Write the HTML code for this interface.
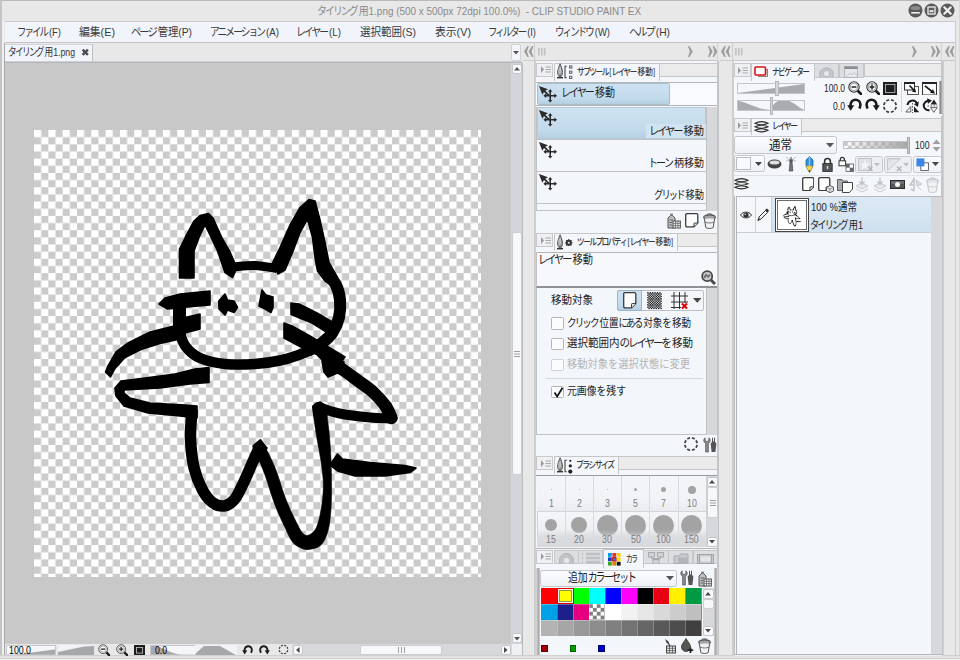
<!DOCTYPE html>
<html lang="ja"><head><meta charset="utf-8"><title>CLIP STUDIO PAINT EX</title>
<style>
html,body{margin:0;padding:0}
body{width:960px;height:660px;overflow:hidden;background:#e8e8e8;position:relative;font-family:"Liberation Sans","Noto Sans CJK JP",sans-serif}
div,span,svg{position:absolute;box-sizing:border-box}
.t{white-space:nowrap;transform-origin:0 50%;font-family:"Liberation Sans","Noto Sans CJK JP",sans-serif}
.t .k{position:static;letter-spacing:-.2em}
</style></head>
<body>
<div style="left:0px;top:0px;width:960px;height:21px;background:#e8e8e8;border-top:1px solid #b9b9b9"></div>
<span class="t" style="transform:scaleX(0.902);left:317.0px;top:3.0px;font-size:11px;line-height:16px;color:#8a8a8a;"><span class="k">タイリン</span>グ用1.png (500 x 500px 72dpi 100.0%)&nbsp; - CLIP STUDIO PAINT EX</span>
<svg style="left:907.5px;top:3.2px;" width="15" height="15" viewBox="0 0 15 15"><circle cx="7.5" cy="7.5" r="7" fill="#5a5a5a"/><ellipse cx="7.5" cy="5" rx="5" ry="2" fill="#8a8a8a"/><rect x="3.2" y="9" width="8.6" height="1.6" fill="#eee"/></svg>
<svg style="left:923.5px;top:3.2px;" width="15" height="15" viewBox="0 0 15 15"><circle cx="7.5" cy="7.5" r="7" fill="#5a5a5a"/><rect x="4" y="4" width="7" height="7" fill="none" stroke="#eee" stroke-width="1.3"/><rect x="5.5" y="7" width="4" height="2.2" fill="#ddd"/></svg>
<svg style="left:939.5px;top:3.2px;" width="15" height="15" viewBox="0 0 15 15"><circle cx="7.5" cy="7.5" r="7" fill="#5a5a5a"/><path d="M4.3 4.3 L10.7 10.7 M10.7 4.3 L4.3 10.7" stroke="#f2f2f2" stroke-width="2.2" stroke-linecap="round"/></svg>
<div style="left:5px;top:21px;width:950px;height:22px;background:#f1f4fa;border-top:1px solid #c9c9c9;border-bottom:1px solid #c4c4c4"></div>
<span class="t" style="transform:scaleX(0.818);left:17.0px;top:23.5px;font-size:11.5px;line-height:17px;color:#3a3a3a;"><span class="k">ファイ</span>ル(F)</span>
<span class="t" style="transform:scaleX(0.939);left:79.0px;top:23.5px;font-size:11.5px;line-height:17px;color:#3a3a3a;">編集(E)</span>
<span class="t" style="transform:scaleX(0.894);left:131.0px;top:23.5px;font-size:11.5px;line-height:17px;color:#3a3a3a;"><span class="k">ペー</span>ジ管理(P)</span>
<span class="t" style="transform:scaleX(0.846);left:210.0px;top:23.5px;font-size:11.5px;line-height:17px;color:#3a3a3a;"><span class="k">アニメーショ</span>ン(A)</span>
<span class="t" style="transform:scaleX(0.852);left:296.0px;top:23.5px;font-size:11.5px;line-height:17px;color:#3a3a3a;"><span class="k">レイヤ</span>ー(L)</span>
<span class="t" style="transform:scaleX(0.913);left:360.0px;top:23.5px;font-size:11.5px;line-height:17px;color:#3a3a3a;">選択範囲(S)</span>
<span class="t" style="transform:scaleX(0.939);left:435.0px;top:23.5px;font-size:11.5px;line-height:17px;color:#3a3a3a;">表示(V)</span>
<span class="t" style="transform:scaleX(0.814);left:488.0px;top:23.5px;font-size:11.5px;line-height:17px;color:#3a3a3a;"><span class="k">フィルタ</span>ー(I)</span>
<span class="t" style="transform:scaleX(0.823);left:555.0px;top:23.5px;font-size:11.5px;line-height:17px;color:#3a3a3a;"><span class="k">ウィンド</span>ウ(W)</span>
<span class="t" style="transform:scaleX(0.894);left:629.0px;top:23.5px;font-size:11.5px;line-height:17px;color:#3a3a3a;"><span class="k">ヘル</span>プ(H)</span>
<div style="left:0px;top:0px;width:1.5px;height:660px;background:#c4c4c4"></div>
<div style="left:1.5px;top:21px;width:2.5px;height:634px;background:#f0f0f0"></div>
<div style="left:4px;top:43px;width:1.5px;height:612px;background:#a8a8a8"></div>
<div style="left:955px;top:21px;width:1px;height:634px;background:#cccccc"></div>
<div style="left:958.5px;top:0px;width:1.5px;height:660px;background:#d8d8d8"></div>
<div style="left:0px;top:655px;width:960px;height:5px;background:linear-gradient(#e4e4e4 0,#e4e4e4 55%,#cfcfcf 56%,#cfcfcf 72%,#f0f0f0 73%);border-top:1px solid #d0d0d0"></div>
<div style="left:5px;top:43px;width:517px;height:18px;background:#e8e8e8"></div>
<div style="left:5px;top:44.2px;width:88px;height:17px;background:#f1f4fa;border-right:1px solid #bcbcbc;border-top:1px solid #d2d4d8"></div>
<span class="t" style="transform:scaleX(0.791);left:8.0px;top:44.2px;font-size:11px;line-height:16px;color:#333;"><span class="k">タイリン</span>グ用1.png</span>
<svg style="left:80.5px;top:48.4px;" width="8.5" height="8.5" viewBox="0 0 8.5 8.5"><path d="M1.6 1.6 L6.9 6.9 M6.9 1.6 L1.6 6.9" stroke="#4e4e4e" stroke-width="2.5"/></svg>
<div style="left:511.3px;top:43.8px;width:10.2px;height:17px;background:#f4f6fb;border:1px solid #cfd0d3;border-radius:2px"></div>
<svg style="left:513.4px;top:50.5px;" width="6" height="4" viewBox="0 0 6 4"><path d="M0 0 L6 0 L3 3.5 Z" fill="#555"/></svg>
<div style="left:5px;top:60.8px;width:517px;height:2.7px;background:linear-gradient(#dcdfe4,#a6a8ab)"></div>
<div style="left:5px;top:63px;width:506px;height:581px;background:#c8c8c8"></div>
<svg style="left:33.8px;top:129.6px" width="447.6" height="447.3" viewBox="0 0 62.5 62.5" preserveAspectRatio="none"><defs><pattern id="chk" width="2" height="2" patternUnits="userSpaceOnUse"><rect width="2" height="2" fill="#fff"/><rect x="1" y="0" width="1" height="1" fill="#cbcbcb"/><rect x="0" y="1" width="1" height="1" fill="#cbcbcb"/></pattern></defs><rect width="62.5" height="62.5" fill="url(#chk)"/></svg>
<svg style="left:34px;top:130px" width="447.5" height="447.5" viewBox="34 130 447.5 447.5" shape-rendering="geometricPrecision"><polygon points="179.5,278 179.5,249 186,236 194,221 200,215.5 208.5,213.5 213,218 222,238 230,252 237,268 232.5,277.5 225,272.5 217.5,251 210,235 205,225 199,237.5 194,251 194,278" fill="#000" stroke="#000" stroke-width="1.6" stroke-linejoin="round"/><path d="M233 267 C236.7 266.8 247.7 265.2 255 265.5 C262.3 265.8 273.3 268.0 277 268.5" fill="none" stroke="#000" stroke-width="9" stroke-linejoin="round" stroke-linecap="butt"/><polygon points="272.5,263 280,247.5 290,225 300,207.5 309,199.5 315,201 320,220 325,242.5 329,262.5 337.5,277.5 331,285 325,281 317.5,271 315,257.5 312.5,237.5 307.5,219 300,232.5 292.5,252.5 285,270 278,274" fill="#000" stroke="#000" stroke-width="1.6" stroke-linejoin="round"/><path d="M326 272 C327.7 274.2 333.7 280.3 336 285 C338.3 289.7 339.5 294.6 340 300 C340.5 305.4 340.2 312.1 339 317.5 C337.8 322.9 335.2 328.3 332.5 332.5 C329.8 336.7 326.7 339.4 322.5 342.5 C318.3 345.6 310.0 349.6 307.5 351" fill="none" stroke="#000" stroke-width="12" stroke-linejoin="round" stroke-linecap="butt"/><path d="M312 349.5 C310.0 350.3 305.3 352.7 300 354.5 C294.7 356.3 287.5 358.9 280 360.5 C272.5 362.1 264.2 363.4 255 364 C245.8 364.6 234.2 365.0 225 364 C215.8 363.0 206.5 360.8 200 358 C193.5 355.2 189.3 351.2 186 347 C182.7 342.8 181.2 337.8 180 333 C178.8 328.2 179.1 322.7 179 318 C178.9 313.3 179.4 307.2 179.5 305" fill="none" stroke="#000" stroke-width="10.5" stroke-linejoin="round" stroke-linecap="butt"/><path d="M179.5 300 L179.5 336" fill="none" stroke="#000" stroke-width="13" stroke-linejoin="round" stroke-linecap="butt"/><polygon points="159,304 165,298 180,294 210,291 210,305 187.5,307 167.5,309" fill="#000" stroke="#000" stroke-width="1.6" stroke-linejoin="round"/><polygon points="185,317.5 200,314 200,329 185,333" fill="#000" stroke="#000" stroke-width="1.6" stroke-linejoin="round"/><polygon points="178,325 150,332 128,343 116,352 108,366 105.5,372 110.5,377 115,368.5 125,357.5 141,349.5 160,343.5 178,339.5" fill="#000" stroke="#000" stroke-width="1.6" stroke-linejoin="round"/><polygon points="218.75,301 225,294 227.5,300 234,301 237.5,307.5 234,312.5 227.5,310 225,315 219,309" fill="#000" stroke="#000" stroke-width="1.6" stroke-linejoin="round"/><polygon points="259,306 262,290 266,295 273,297 273,307.5 271,312.5 265,309" fill="#000" stroke="#000" stroke-width="1.6" stroke-linejoin="round"/><polygon points="291,303 299,304 317,313 334,323 328,333 312,323 291,314.5" fill="#000" stroke="#000" stroke-width="1.6" stroke-linejoin="round"/><polygon points="284,323 292,326 310,336 330,348 345,357 338,366 322,357 300,346.5 284,338" fill="#000" stroke="#000" stroke-width="1.6" stroke-linejoin="round"/><path d="M322 352 C323.7 353.7 328.3 358.9 332 362 C335.7 365.1 339.8 367.5 344 370.5 C348.2 373.5 352.1 376.3 357 380 C361.9 383.7 368.8 388.2 373.5 392.5 C378.2 396.8 382.5 401.8 385.5 406 C388.5 410.2 390.5 416.0 391.5 418" fill="none" stroke="#000" stroke-width="12.5" stroke-linejoin="round" stroke-linecap="round"/><polygon points="322,361 333,356 344,362 340,372 328,377 324,372" fill="#000" stroke="#000" stroke-width="1.6" stroke-linejoin="round"/><path d="M391 418.5 C387.5 418.3 377.7 418.2 370 417.5 C362.3 416.8 351.7 415.6 345 414.5 C338.3 413.4 334.5 412.2 330 411 C325.5 409.8 320.0 407.7 318 407" fill="none" stroke="#000" stroke-width="10" stroke-linejoin="round" stroke-linecap="round"/><polygon points="209,367.5 209,382.5 190,384 160,388 124,390 124,393 130,398 150,403 185,405 197,406 197,418 180,416 148,413 124,406 116,396 115,388 121,381 145,378 175,374 195,369" fill="#000" stroke="#000" stroke-width="1.6" stroke-linejoin="round"/><path d="M192 410 C191.8 414.6 190.2 427.9 190.5 437.5 C190.8 447.1 192.0 458.8 194 467.5 C196.0 476.2 199.4 484.2 202.5 490 C205.6 495.8 208.9 499.8 212.5 502.5 C216.1 505.2 220.4 506.4 224 506 C227.6 505.6 230.9 503.5 234 500 C237.1 496.5 239.4 491.2 242.5 485 C245.6 478.8 249.6 469.0 252.5 462.5 C255.4 456.0 258.8 448.8 260 446" fill="none" stroke="#000" stroke-width="11.5" stroke-linejoin="round" stroke-linecap="butt"/><path d="M255.5 450 C256.3 455.8 261.8 465.8 265 475 C268.2 484.2 271.7 496.2 275 505 C278.3 513.8 282.1 521.3 285 527.5 C287.9 533.7 289.8 538.6 292.5 542 C295.2 545.4 298.2 546.8 301 548 C303.8 549.2 305.7 550.0 309 549.5 C312.3 549.0 317.8 548.1 321 545 C324.2 541.9 326.3 537.0 328 531 C329.7 525.0 330.4 516.7 331 509 C331.6 501.3 331.5 493.1 331.5 485 C331.5 476.9 331.3 468.7 331 460.6 C330.7 452.5 330.1 443.7 329.5 436.4 C328.9 429.1 327.7 421.7 327.3 417 C326.9 412.3 328.2 410.4 327 408 C325.8 405.6 322.3 402.8 320 402.5 C317.7 402.2 314.2 404.6 313 406 C311.8 407.4 312.4 405.9 313 411 C313.6 416.1 315.3 428.1 316.6 436.4 C317.9 444.7 319.8 452.5 320.9 460.6 C322.0 468.7 323.3 476.9 323.4 485 C323.4 493.1 322.4 501.9 321.2 509 C320.0 516.1 318.4 523.2 316.4 527.5 C314.4 531.8 311.3 534.1 309 535 C306.7 535.9 304.8 535.6 302.5 533 C300.2 530.4 297.9 525.5 295 519.5 C292.1 513.5 288.3 505.7 285 497 C281.7 488.3 278.7 476.5 275 467.5 C271.3 458.5 265.5 447.6 263 443 C260.5 438.4 261.2 438.8 260 440 C258.8 441.2 254.7 444.2 255.5 450 Z" fill="#000" stroke="#000" stroke-width="0.6" stroke-linejoin="round"/><polygon points="253,446 260,440 267,448 262,458 256,456" fill="#000" stroke="#000" stroke-width="1.6" stroke-linejoin="round"/><polygon points="313,406 320,402 327,407 326,416 314,416" fill="#000" stroke="#000" stroke-width="1.6" stroke-linejoin="round"/><polygon points="330,465 337.5,454 342.5,459 370,462.5 405,465.5 416,468 410,472.5 385,476 355,476 337.5,471" fill="#000" stroke="#000" stroke-width="1.6" stroke-linejoin="round"/></svg>
<div style="left:511px;top:63px;width:11px;height:581px;background:#d3d5da"></div>
<div style="left:511.7px;top:64px;width:10px;height:9.5px;background:#f8fafd;border:1px solid #c2c4c8;border-radius:2.5px"></div>
<svg style="left:514px;top:67px;" width="6" height="4" viewBox="0 0 6 4"><path d="M0 3.5 L6 3.5 L3 0 Z" fill="#555"/></svg>
<div style="left:511.7px;top:633.3px;width:10px;height:10px;background:#f8fafd;border:1px solid #c2c4c8;border-radius:2.5px"></div>
<svg style="left:514px;top:636.5px;" width="6" height="4" viewBox="0 0 6 4"><path d="M0 0 L6 0 L3 3.5 Z" fill="#555"/></svg>
<!--VT-->
<div style="left:5px;top:644px;width:517px;height:11px;background:#e8e8e8"></div>
<!--BB-->
<div style="left:522px;top:43px;width:12.5px;height:612px;background:#e8e8e8"></div>
<div style="left:534px;top:43px;width:1px;height:612px;background:#cecece"></div>
<div style="left:522.5px;top:60px;width:12px;height:1px;background:#cfcfcf"></div>
<svg style="left:524.2px;top:46.4px;" width="9.6" height="11" viewBox="0 0 9.6 11"><path d="M4.8 0 L3.4 0 L0 5.5 L3.4 11 L4.8 11 L3 5.5 Z" fill="#9c9c9c"/><path d="M4.8 0 L3.4 0 L0 5.5 L3.4 11 L4.8 11 L3 5.5 Z" fill="#9c9c9c" transform="translate(4.6 0)"/></svg>
<div style="left:535px;top:43px;width:183px;height:18px;background:#e8e8e8;border-bottom:1px solid #c6c6c6;border-right:1px solid #d4d4d4"></div>
<svg style="left:538px;top:48.2px;" width="8" height="7.4" viewBox="0 0 8 7.4"><path d="M0.9 0 V7.4 M3.8 0 V7.4 M6.7 0 V7.4" stroke="#c2c2c2" stroke-width="1.7"/></svg>
<svg style="left:688px;top:46.4px;" width="5" height="11" viewBox="0 0 5 11"><path d="M0 0 L1.4 0 L4.8 5.5 L1.4 11 L0 11 L1.8 5.5 Z" fill="#9c9c9c"/></svg>
<svg style="left:707.5px;top:46.4px;" width="9.6" height="11" viewBox="0 0 9.6 11"><path d="M0 0 L1.4 0 L4.8 5.5 L1.4 11 L0 11 L1.8 5.5 Z" fill="#9c9c9c"/><path d="M0 0 L1.4 0 L4.8 5.5 L1.4 11 L0 11 L1.8 5.5 Z" fill="#9c9c9c" transform="translate(4.6 0)"/></svg>
<div style="left:535px;top:61px;width:184px;height:594px;background:#f3f6fb;border-right:2px solid #c4c4c6;border-left:1px solid #cfcfcf"></div>
<div style="left:536.0px;top:62.5px;width:17px;height:14px;background:#eef0f4;border:1px solid #c9c9c9"></div>
<svg style="left:540.5px;top:66.0px;" width="10" height="7" viewBox="0 0 10 7"><path d="M0 0 L3 3.5 L0 7 Z" fill="#9a9a9a"/><path d="M4.5 1 H10 M4.5 3.5 H10 M4.5 6 H10" stroke="#a8a8a8" stroke-width="1.2"/></svg>
<div style="left:659px;top:62.5px;width:58.5px;height:14px;background:#ebebeb;border:1px solid #c6c6c6"></div>
<div style="left:553.5px;top:62.5px;width:106px;height:18px;background:#f3f6fb;border:1px solid #c6c6c6;border-bottom:none"></div>
<svg style="left:557px;top:63px;" width="6.2" height="16.5" viewBox="0 0 7 17"><path d="M3.5 0 C2.6 2.5 0.6 7 0.6 10 C0.6 12 1.6 13 2.1 14 L4.9 14 C5.4 13 6.4 12 6.4 10 C6.4 7 4.4 2.5 3.5 0 Z" fill="#9a9a9a" stroke="#4a4a4a" stroke-width="1"/><path d="M3.5 3.5 V10.5" stroke="#e8e8e8" stroke-width="1"/><path d="M2.2 5 C1.8 7 1.8 10 2.4 12.5" stroke="#c8c8c8" stroke-width=".8" fill="none"/><rect x="0" y="15" width="7" height="1.6" fill="#333"/><rect x="2" y="13.6" width="3" height="1.5" fill="#666"/></svg>
<svg style="left:564.4px;top:65.3px;" width="9" height="15" viewBox="0 0 9 15"><path d="M2.8 1.2 H1 V12.8 H2.8" fill="none" stroke="#444" stroke-width="1.1"/><rect x="5" y="0.4" width="3.4" height="3.2" fill="#666"/><rect x="6" y="1.4" width="1.4" height="1.2" fill="#ddd"/><rect x="5" y="5.6" width="3.4" height="3.2" fill="#666"/><rect x="6" y="6.6" width="1.4" height="1.2" fill="#ddd"/><rect x="5" y="10.8" width="3.4" height="3.2" fill="#666"/><rect x="6" y="11.8" width="1.4" height="1.2" fill="#ddd"/></svg>
<span class="t" style="transform:scaleX(0.811);left:577.0px;top:65.0px;font-size:9.5px;line-height:14px;color:#3c3c3c;font-weight:500;"><span class="k">サブツー</span>ル[<span class="k">レイヤ</span>ー移動]</span>
<div style="left:536px;top:81.5px;width:181px;height:24.5px;background:#f8fafd;border-top:1px solid #b6b6b6;border-bottom:1px solid #b6b6b6"></div>
<div style="left:537px;top:83px;width:133px;height:21.5px;background:linear-gradient(#cde2f1,#c4dbec 70%,#b5cfe2);border:1px solid #a9bccb;border-radius:2px"></div>
<svg style="left:539.3px;top:85.8px;" width="18.5" height="17" viewBox="0 0 18.5 17"><path d="M0 0 L9 3.2 L6.3 4.8 L10.6 8.9 L9.3 10.2 L5 6.1 L3.3 8.8 Z" fill="#2a2a2a"/><path d="M10.4 9.0 L10.4 5.7 L9.0 5.7 L11.2 3.0 L13.4 5.7 L12.0 5.7 L12.0 9.0 L15.3 9.0 L15.3 7.6 L18.0 9.8 L15.3 12.0 L15.3 10.6 L12.0 10.6 L12.0 13.9 L13.4 13.9 L11.2 16.6 L9.0 13.9 L10.4 13.9 L10.4 10.6 L7.1 10.6 L7.1 12.0 L4.4 9.8 L7.1 7.6 L7.1 9.0 Z" fill="#2a2a2a"/></svg>
<span class="t" style="transform:scaleX(0.838);left:561.0px;top:84.0px;font-size:12px;line-height:18px;color:#222;"><span class="k">レイヤ</span>ー移動</span>
<div style="left:536px;top:107px;width:170.5px;height:104px;background:#f3f6fb;border:1px solid #c2c2c2;border-top:none"></div>
<div style="left:706.5px;top:107px;width:10.5px;height:104px;background:#d6d8dc"></div>
<div style="left:536.5px;top:107.3px;width:169.5px;height:31.5px;background:linear-gradient(#cde2f1,#c4dbec 70%,#b5cfe2);border:1px solid #b4c9d9"></div>
<div style="left:645.5px;top:124px;width:60px;height:14px;background:#d2e4f1"></div>
<div style="left:536.5px;top:138.7px;width:169.5px;height:1px;background:#c2c2c2"></div>
<div style="left:536.5px;top:171px;width:169.5px;height:1px;background:#c2c2c2"></div>
<div style="left:536.5px;top:203px;width:169.5px;height:1px;background:#c2c2c2"></div>
<svg style="left:539.3px;top:110.1px;" width="18.5" height="17" viewBox="0 0 18.5 17"><path d="M0 0 L9 3.2 L6.3 4.8 L10.6 8.9 L9.3 10.2 L5 6.1 L3.3 8.8 Z" fill="#2a2a2a"/><path d="M10.4 9.0 L10.4 5.7 L9.0 5.7 L11.2 3.0 L13.4 5.7 L12.0 5.7 L12.0 9.0 L15.3 9.0 L15.3 7.6 L18.0 9.8 L15.3 12.0 L15.3 10.6 L12.0 10.6 L12.0 13.9 L13.4 13.9 L11.2 16.6 L9.0 13.9 L10.4 13.9 L10.4 10.6 L7.1 10.6 L7.1 12.0 L4.4 9.8 L7.1 7.6 L7.1 9.0 Z" fill="#2a2a2a"/></svg>
<span class="t" style="transform:scaleX(0.890);left:649.0px;top:122.5px;font-size:11.5px;line-height:17px;color:#222;"><span class="k">レイヤ</span>ー移動</span>
<svg style="left:539.3px;top:142.1px;" width="18.5" height="17" viewBox="0 0 18.5 17"><path d="M0 0 L9 3.2 L6.3 4.8 L10.6 8.9 L9.3 10.2 L5 6.1 L3.3 8.8 Z" fill="#2a2a2a"/><path d="M10.4 9.0 L10.4 5.7 L9.0 5.7 L11.2 3.0 L13.4 5.7 L12.0 5.7 L12.0 9.0 L15.3 9.0 L15.3 7.6 L18.0 9.8 L15.3 12.0 L15.3 10.6 L12.0 10.6 L12.0 13.9 L13.4 13.9 L11.2 16.6 L9.0 13.9 L10.4 13.9 L10.4 10.6 L7.1 10.6 L7.1 12.0 L4.4 9.8 L7.1 7.6 L7.1 9.0 Z" fill="#2a2a2a"/></svg>
<span class="t" style="transform:scaleX(0.869);left:648.0px;top:154.5px;font-size:11.5px;line-height:17px;color:#222;"><span class="k">トー</span>ン柄移動</span>
<svg style="left:539.3px;top:174.1px;" width="18.5" height="17" viewBox="0 0 18.5 17"><path d="M0 0 L9 3.2 L6.3 4.8 L10.6 8.9 L9.3 10.2 L5 6.1 L3.3 8.8 Z" fill="#2a2a2a"/><path d="M10.4 9.0 L10.4 5.7 L9.0 5.7 L11.2 3.0 L13.4 5.7 L12.0 5.7 L12.0 9.0 L15.3 9.0 L15.3 7.6 L18.0 9.8 L15.3 12.0 L15.3 10.6 L12.0 10.6 L12.0 13.9 L13.4 13.9 L11.2 16.6 L9.0 13.9 L10.4 13.9 L10.4 10.6 L7.1 10.6 L7.1 12.0 L4.4 9.8 L7.1 7.6 L7.1 9.0 Z" fill="#2a2a2a"/></svg>
<span class="t" style="transform:scaleX(0.805);left:654.0px;top:186.5px;font-size:11.5px;line-height:17px;color:#222;"><span class="k">グリッ</span>ド移動</span>
<div style="left:536px;top:211px;width:181px;height:20px;background:#f3f6fb"></div>
<svg style="left:666px;top:212.5px;" width="15" height="16" viewBox="0 0 15 16"><path d="M2 5 L5.5 1.5 L9 5 V15 H2 Z" fill="#bdbdbd" stroke="#555" stroke-width="1"/><rect x="4.2" y="0.6" width="2.6" height="2.4" fill="#777"/><rect x="7" y="8" width="7.4" height="7" fill="#f0f0f0" stroke="#555" stroke-width="1"/><path d="M7 10.3 H14.4 M7 12.6 H14.4 M9.5 8 V15 M12 8 V15" stroke="#666" stroke-width=".8"/><path d="M3.5 7 H7 M3.5 9.5 H6 M3.5 12 H6" stroke="#666" stroke-width="1"/></svg>
<svg style="left:685px;top:213px;" width="13.5" height="14.5" viewBox="0 0 13.5 14.5"><path d="M2 0.7 H11.5 Q12.8 0.7 12.8 2 V10.0 L9.0 13.8 H2 Q0.7 13.8 0.7 12.5 V2 Q0.7 0.7 2 0.7 Z" fill="#fdfdfd" stroke="#3a3a3a" stroke-width="1.3"/><path d="M12.8 10.0 H9.8 Q9.0 10.0 9.0 10.8 V13.8" fill="#e4e4e4" stroke="#3a3a3a" stroke-width="1"/></svg>
<svg style="left:703px;top:213px;" width="13" height="16" viewBox="0 0 13 16"><ellipse cx="6.5" cy="4.2" rx="5.8" ry="2.4" fill="#a4a4a4" stroke="#555" stroke-width="1.2"/><path d="M3.5 2.6 C3.5 0.2 9.5 0.2 9.5 2.6" fill="none" stroke="#555" stroke-width="1"/><path d="M1.3 5.5 L2.8 14.5 C4 15.8 9 15.8 10.2 14.5 L11.7 5.5" fill="#f1f1f1" stroke="#555" stroke-width="1"/><path d="M2 9 C4 10.3 9 10.3 11 9" fill="none" stroke="#555" stroke-width=".8"/></svg>
<div style="left:536.0px;top:233px;width:17px;height:14px;background:#eef0f4;border:1px solid #c9c9c9"></div>
<svg style="left:540.5px;top:236.5px;" width="10" height="7" viewBox="0 0 10 7"><path d="M0 0 L3 3.5 L0 7 Z" fill="#9a9a9a"/><path d="M4.5 1 H10 M4.5 3.5 H10 M4.5 6 H10" stroke="#a8a8a8" stroke-width="1.2"/></svg>
<div style="left:677px;top:233px;width:40.5px;height:14px;background:#ebebeb;border:1px solid #c6c6c6"></div>
<div style="left:553.5px;top:233px;width:124px;height:18px;background:#f3f6fb;border:1px solid #c6c6c6;border-bottom:none"></div>
<svg style="left:557px;top:233.5px;" width="6.2" height="16.5" viewBox="0 0 7 17"><path d="M3.5 0 C2.6 2.5 0.6 7 0.6 10 C0.6 12 1.6 13 2.1 14 L4.9 14 C5.4 13 6.4 12 6.4 10 C6.4 7 4.4 2.5 3.5 0 Z" fill="#9a9a9a" stroke="#4a4a4a" stroke-width="1"/><path d="M3.5 3.5 V10.5" stroke="#e8e8e8" stroke-width="1"/><path d="M2.2 5 C1.8 7 1.8 10 2.4 12.5" stroke="#c8c8c8" stroke-width=".8" fill="none"/><rect x="0" y="15" width="7" height="1.6" fill="#333"/><rect x="2" y="13.6" width="3" height="1.5" fill="#666"/></svg>
<svg style="left:565px;top:238.8px;" width="7.6" height="7.6" viewBox="0 0 9 9"><circle cx="4.5" cy="4.5" r="2.6" fill="none" stroke="#333" stroke-width="2"/><path d="M4.5 0 V9 M0 4.5 H9 M1.3 1.3 L7.7 7.7 M7.7 1.3 L1.3 7.7" stroke="#333" stroke-width="1.3"/><circle cx="4.5" cy="4.5" r="1.2" fill="#eee"/></svg>
<span class="t" style="transform:scaleX(0.807);left:577.0px;top:234.7px;font-size:9.5px;line-height:14px;color:#3c3c3c;font-weight:500;"><span class="k">ツールプロパテ</span>ィ[<span class="k">レイヤ</span>ー移動]</span>
<div style="left:536px;top:251.5px;width:181px;height:36px;background:#f6f8fc;border-top:1px solid #b6b6b6;border-bottom:2px solid #8f9194;border-left:1px solid #c2c2c2"></div>
<span class="t" style="transform:scaleX(0.853);left:538.0px;top:250.5px;font-size:12px;line-height:18px;color:#222;"><span class="k">レイヤ</span>ー移動</span>
<svg style="left:701px;top:270px;" width="15" height="15" viewBox="0 0 15 15"><circle cx="6.2" cy="6.2" r="5" fill="#c9c9c9" stroke="#4a4a4a" stroke-width="1.8"/><path d="M10 10 L14 14" stroke="#4a4a4a" stroke-width="3"/><path d="M3.2 8 L5 4.8 L7 6.8 L9 4.4" fill="none" stroke="#6a6a6a" stroke-width="1.6"/></svg>
<div style="left:536px;top:288px;width:170.5px;height:147px;background:#f3f6fb;border:1px solid #c2c2c2;border-top:none"></div>
<div style="left:706.5px;top:288px;width:10.5px;height:147px;background:#d6d8dc"></div>
<span class="t" style="transform:scaleX(0.913);left:551.0px;top:292.0px;font-size:11.5px;line-height:17px;color:#222;">移動対象</span>
<div style="left:617px;top:290px;width:87px;height:21px;background:#f4f6fa;border:1px solid #b9c0c8;border-radius:2px"></div>
<div style="left:617px;top:290px;width:25px;height:21px;background:linear-gradient(#cde2f1,#c4dbec 70%,#b5cfe2);border:1px solid #9fb4c6;border-radius:2px 0 0 2px"></div>
<svg style="left:623px;top:292.3px;" width="13.5" height="16.5" viewBox="0 0 13.5 16.5"><path d="M2 0.7 H11.5 Q12.8 0.7 12.8 2 V11.5 L8.5 15.8 H2 Q0.7 15.8 0.7 14.5 V2 Q0.7 0.7 2 0.7 Z" fill="#fdfdfd" stroke="#3a3a3a" stroke-width="1.3"/><path d="M12.8 11.5 H9.3 Q8.5 11.5 8.5 12.3 V15.8" fill="#e4e4e4" stroke="#3a3a3a" stroke-width="1"/></svg>
<svg style="left:646.8px;top:292.3px;" width="15" height="17.5" viewBox="0 0 15 17.5"><circle cx="0.90" cy="0.90" r="0.82" fill="#1a1a1a"/><circle cx="3.30" cy="0.90" r="0.82" fill="#1a1a1a"/><circle cx="5.70" cy="0.90" r="0.82" fill="#1a1a1a"/><circle cx="8.10" cy="0.90" r="0.82" fill="#1a1a1a"/><circle cx="10.50" cy="0.90" r="0.82" fill="#1a1a1a"/><circle cx="12.90" cy="0.90" r="0.82" fill="#1a1a1a"/><circle cx="2.10" cy="2.10" r="0.82" fill="#1a1a1a"/><circle cx="4.50" cy="2.10" r="0.82" fill="#1a1a1a"/><circle cx="6.90" cy="2.10" r="0.82" fill="#1a1a1a"/><circle cx="9.30" cy="2.10" r="0.82" fill="#1a1a1a"/><circle cx="11.70" cy="2.10" r="0.82" fill="#1a1a1a"/><circle cx="14.10" cy="2.10" r="0.82" fill="#1a1a1a"/><circle cx="0.90" cy="3.30" r="0.82" fill="#1a1a1a"/><circle cx="3.30" cy="3.30" r="0.82" fill="#1a1a1a"/><circle cx="5.70" cy="3.30" r="0.82" fill="#1a1a1a"/><circle cx="8.10" cy="3.30" r="0.82" fill="#1a1a1a"/><circle cx="10.50" cy="3.30" r="0.82" fill="#1a1a1a"/><circle cx="12.90" cy="3.30" r="0.82" fill="#1a1a1a"/><circle cx="2.10" cy="4.50" r="0.82" fill="#1a1a1a"/><circle cx="4.50" cy="4.50" r="0.82" fill="#1a1a1a"/><circle cx="6.90" cy="4.50" r="0.82" fill="#1a1a1a"/><circle cx="9.30" cy="4.50" r="0.82" fill="#1a1a1a"/><circle cx="11.70" cy="4.50" r="0.82" fill="#1a1a1a"/><circle cx="14.10" cy="4.50" r="0.82" fill="#1a1a1a"/><circle cx="0.90" cy="5.70" r="0.82" fill="#1a1a1a"/><circle cx="3.30" cy="5.70" r="0.82" fill="#1a1a1a"/><circle cx="5.70" cy="5.70" r="0.82" fill="#1a1a1a"/><circle cx="8.10" cy="5.70" r="0.82" fill="#1a1a1a"/><circle cx="10.50" cy="5.70" r="0.82" fill="#1a1a1a"/><circle cx="12.90" cy="5.70" r="0.82" fill="#1a1a1a"/><circle cx="2.10" cy="6.90" r="0.82" fill="#1a1a1a"/><circle cx="4.50" cy="6.90" r="0.82" fill="#1a1a1a"/><circle cx="6.90" cy="6.90" r="0.82" fill="#1a1a1a"/><circle cx="9.30" cy="6.90" r="0.82" fill="#1a1a1a"/><circle cx="11.70" cy="6.90" r="0.82" fill="#1a1a1a"/><circle cx="14.10" cy="6.90" r="0.82" fill="#1a1a1a"/><circle cx="0.90" cy="8.10" r="0.82" fill="#1a1a1a"/><circle cx="3.30" cy="8.10" r="0.82" fill="#1a1a1a"/><circle cx="5.70" cy="8.10" r="0.82" fill="#1a1a1a"/><circle cx="8.10" cy="8.10" r="0.82" fill="#1a1a1a"/><circle cx="10.50" cy="8.10" r="0.82" fill="#1a1a1a"/><circle cx="12.90" cy="8.10" r="0.82" fill="#1a1a1a"/><circle cx="2.10" cy="9.30" r="0.82" fill="#1a1a1a"/><circle cx="4.50" cy="9.30" r="0.82" fill="#1a1a1a"/><circle cx="6.90" cy="9.30" r="0.82" fill="#1a1a1a"/><circle cx="9.30" cy="9.30" r="0.82" fill="#1a1a1a"/><circle cx="11.70" cy="9.30" r="0.82" fill="#1a1a1a"/><circle cx="14.10" cy="9.30" r="0.82" fill="#1a1a1a"/><circle cx="0.90" cy="10.50" r="0.82" fill="#1a1a1a"/><circle cx="3.30" cy="10.50" r="0.82" fill="#1a1a1a"/><circle cx="5.70" cy="10.50" r="0.82" fill="#1a1a1a"/><circle cx="8.10" cy="10.50" r="0.82" fill="#1a1a1a"/><circle cx="10.50" cy="10.50" r="0.82" fill="#1a1a1a"/><circle cx="12.90" cy="10.50" r="0.82" fill="#1a1a1a"/><circle cx="2.10" cy="11.70" r="0.82" fill="#1a1a1a"/><circle cx="4.50" cy="11.70" r="0.82" fill="#1a1a1a"/><circle cx="6.90" cy="11.70" r="0.82" fill="#1a1a1a"/><circle cx="9.30" cy="11.70" r="0.82" fill="#1a1a1a"/><circle cx="11.70" cy="11.70" r="0.82" fill="#1a1a1a"/><circle cx="14.10" cy="11.70" r="0.82" fill="#1a1a1a"/><circle cx="0.90" cy="12.90" r="0.82" fill="#1a1a1a"/><circle cx="3.30" cy="12.90" r="0.82" fill="#1a1a1a"/><circle cx="5.70" cy="12.90" r="0.82" fill="#1a1a1a"/><circle cx="8.10" cy="12.90" r="0.82" fill="#1a1a1a"/><circle cx="10.50" cy="12.90" r="0.82" fill="#1a1a1a"/><circle cx="12.90" cy="12.90" r="0.82" fill="#1a1a1a"/><circle cx="2.10" cy="14.10" r="0.82" fill="#1a1a1a"/><circle cx="4.50" cy="14.10" r="0.82" fill="#1a1a1a"/><circle cx="6.90" cy="14.10" r="0.82" fill="#1a1a1a"/><circle cx="9.30" cy="14.10" r="0.82" fill="#1a1a1a"/><circle cx="11.70" cy="14.10" r="0.82" fill="#1a1a1a"/><circle cx="14.10" cy="14.10" r="0.82" fill="#1a1a1a"/><circle cx="0.90" cy="15.30" r="0.82" fill="#1a1a1a"/><circle cx="3.30" cy="15.30" r="0.82" fill="#1a1a1a"/><circle cx="5.70" cy="15.30" r="0.82" fill="#1a1a1a"/><circle cx="8.10" cy="15.30" r="0.82" fill="#1a1a1a"/><circle cx="10.50" cy="15.30" r="0.82" fill="#1a1a1a"/><circle cx="12.90" cy="15.30" r="0.82" fill="#1a1a1a"/><circle cx="2.10" cy="16.50" r="0.82" fill="#1a1a1a"/><circle cx="4.50" cy="16.50" r="0.82" fill="#1a1a1a"/><circle cx="6.90" cy="16.50" r="0.82" fill="#1a1a1a"/><circle cx="9.30" cy="16.50" r="0.82" fill="#1a1a1a"/><circle cx="11.70" cy="16.50" r="0.82" fill="#1a1a1a"/><circle cx="14.10" cy="16.50" r="0.82" fill="#1a1a1a"/></svg>
<svg style="left:670.5px;top:292px;" width="18" height="18" viewBox="0 0 18 18"><path d="M3 0 V17 M8.5 0 V17 M14 0 V11 M0 4 H17 M0 10 H17 M0 15.5 H10" stroke="#333" stroke-width="1" fill="none"/><path d="M11 11.5 L16 16.5 M16 11.5 L11 16.5" stroke="#e00000" stroke-width="2"/></svg>
<svg style="left:692.5px;top:298px;" width="8.5" height="5" viewBox="0 0 8.5 5"><path d="M0 0 L8.5 0 L4.25 4.8 Z" fill="#444"/></svg>
<div style="left:551px;top:317px;width:12.5px;height:12.5px;background:#fbfcfe;border:1px solid #b5b5b5;border-radius:1.5px"></div>
<span class="t" style="transform:scaleX(0.829);left:567.0px;top:314.8px;font-size:11.5px;line-height:17px;color:#222;"><span class="k">クリッ</span>ク位置<span class="k">にあ</span>る対象を移動</span>
<div style="left:551px;top:337.5px;width:12.5px;height:12.5px;background:#fbfcfe;border:1px solid #b5b5b5;border-radius:1.5px"></div>
<span class="t" style="transform:scaleX(0.915);left:567.0px;top:335.3px;font-size:11.5px;line-height:17px;color:#222;">選択範囲内<span class="k">のレイヤー</span>を移動</span>
<div style="left:551px;top:358.5px;width:12.5px;height:12.5px;background:#fbfcfe;border:1px solid #d0d0d0;border-radius:1.5px"></div>
<span class="t" style="transform:scaleX(0.891);left:567.0px;top:356.3px;font-size:11.5px;line-height:17px;color:#b4b4b4;">移動対象を選択状態に変更</span>
<div style="left:551px;top:385.5px;width:12.5px;height:12.5px;background:#fbfcfe;border:1px solid #b5b5b5;border-radius:1.5px"></div>
<svg style="left:552.5px;top:386.5px;" width="11" height="11" viewBox="0 0 11 11"><path d="M1.5 5.5 L4.2 9.5 L9.5 0.8" fill="none" stroke="#111" stroke-width="1.7"/></svg>
<span class="t" style="transform:scaleX(0.855);left:567.0px;top:383.3px;font-size:11.5px;line-height:17px;color:#222;">元画像を残す</span>
<div style="left:546px;top:378px;width:157px;height:1px;background:#d6d8dc"></div>
<div style="left:536px;top:435px;width:181px;height:19.5px;background:#f3f6fb"></div>
<svg style="left:683px;top:436.4px;" width="16" height="16" viewBox="0 0 14 14"><path d="M12.34 7.81 A5.4 5.4 0 0 1 11.30 10.27" stroke="#4a4a4a" stroke-width="1.6" fill="none"/><path d="M10.20 11.35 A5.4 5.4 0 0 1 7.73 12.35" stroke="#4a4a4a" stroke-width="1.6" fill="none"/><path d="M6.19 12.34 A5.4 5.4 0 0 1 3.73 11.30" stroke="#4a4a4a" stroke-width="1.6" fill="none"/><path d="M2.65 10.20 A5.4 5.4 0 0 1 1.65 7.73" stroke="#4a4a4a" stroke-width="1.6" fill="none"/><path d="M1.66 6.19 A5.4 5.4 0 0 1 2.70 3.73" stroke="#4a4a4a" stroke-width="1.6" fill="none"/><path d="M3.80 2.65 A5.4 5.4 0 0 1 6.27 1.65" stroke="#4a4a4a" stroke-width="1.6" fill="none"/><path d="M7.81 1.66 A5.4 5.4 0 0 1 10.27 2.70" stroke="#4a4a4a" stroke-width="1.6" fill="none"/><path d="M11.35 3.80 A5.4 5.4 0 0 1 12.35 6.27" stroke="#4a4a4a" stroke-width="1.6" fill="none"/></svg>
<svg style="left:702.5px;top:436.5px;" width="14" height="16" viewBox="0 0 14 16"><path d="M2.2 0.8 C0.2 2 0.2 5.2 2.6 6.2 L2.6 15 L5.4 15 L5.4 6.2 C7.8 5.2 7.8 2 5.8 0.8 L5.8 3.6 L4 4.6 L2.2 3.6 Z" fill="#8b8b8b" stroke="#555" stroke-width=".7"/><path d="M9 0.8 L9 5 L7.6 6.5 L8.6 15 L12.4 15 L13.4 6.5 L12 5 L12 0.8 L11 0.8 L11 4.2 L10 4.2 L10 0.8 Z" fill="#555"/></svg>
<div style="left:536.0px;top:456px;width:17px;height:14px;background:#eef0f4;border:1px solid #c9c9c9"></div>
<svg style="left:540.5px;top:459.5px;" width="10" height="7" viewBox="0 0 10 7"><path d="M0 0 L3 3.5 L0 7 Z" fill="#9a9a9a"/><path d="M4.5 1 H10 M4.5 3.5 H10 M4.5 6 H10" stroke="#a8a8a8" stroke-width="1.2"/></svg>
<div style="left:618px;top:456px;width:99.5px;height:14px;background:#ebebeb;border:1px solid #c6c6c6"></div>
<div style="left:553.5px;top:456px;width:65.5px;height:18px;background:#f3f6fb;border:1px solid #c6c6c6;border-bottom:none"></div>
<svg style="left:557px;top:456.5px;" width="6.2" height="16.5" viewBox="0 0 7 17"><path d="M3.5 0 C2.6 2.5 0.6 7 0.6 10 C0.6 12 1.6 13 2.1 14 L4.9 14 C5.4 13 6.4 12 6.4 10 C6.4 7 4.4 2.5 3.5 0 Z" fill="#9a9a9a" stroke="#4a4a4a" stroke-width="1"/><path d="M3.5 3.5 V10.5" stroke="#e8e8e8" stroke-width="1"/><path d="M2.2 5 C1.8 7 1.8 10 2.4 12.5" stroke="#c8c8c8" stroke-width=".8" fill="none"/><rect x="0" y="15" width="7" height="1.6" fill="#333"/><rect x="2" y="13.6" width="3" height="1.5" fill="#666"/></svg>
<svg style="left:564.4px;top:458.5px;" width="9" height="16" viewBox="0 0 9 16"><path d="M2.8 1.2 H1 V12.8 H2.8" fill="none" stroke="#444" stroke-width="1.1"/><circle cx="6.3" cy="1.8" r="1.1" fill="#222"/><circle cx="6.3" cy="6.8" r="1.6" fill="#222"/><circle cx="6.3" cy="12.6" r="2.1" fill="#222"/></svg>
<span class="t" style="transform:scaleX(0.824);left:576.0px;top:458.0px;font-size:9.5px;line-height:14px;color:#3c3c3c;font-weight:500;"><span class="k">ブラシサイ</span>ズ</span>
<div style="left:536px;top:474.5px;width:181px;height:74px;background:#f3f6fb;border-top:1px solid #9c9c9c;border-bottom:1px solid #b6b6b6"></div>
<div style="left:536.5px;top:476px;width:170px;height:71px;background:linear-gradient(#f2f4f8 0,#f2f4f8 49%,#f4f6fa 50%,#eef0f3 75%,#d2d4d8 100%);border:1px solid #cfd1d5"></div>
<div style="left:537px;top:476px;width:169px;height:35px;background:linear-gradient(#f3f5f9 0,#f1f3f7 70%,#e9ebef 100%)"></div>
<div style="left:537px;top:511px;width:169px;height:1px;background:#d2d4d8"></div>
<div style="left:564.9499999999999px;top:476px;width:1px;height:71px;background:#d8dade"></div>
<div style="left:593.0999999999999px;top:476px;width:1px;height:71px;background:#d8dade"></div>
<div style="left:621.25px;top:476px;width:1px;height:71px;background:#d8dade"></div>
<div style="left:649.4px;top:476px;width:1px;height:71px;background:#d8dade"></div>
<div style="left:677.55px;top:476px;width:1px;height:71px;background:#d8dade"></div>
<div style="left:550.5px;top:489.0px;width:1px;height:1px;background:#a3a3a3;border-radius:50%"></div>
<span class="t" style="transform:scaleX(0.840);left:548.5px;top:495.3px;font-size:10.5px;line-height:16px;color:#808080;">1</span>
<div style="left:578.65px;top:489.0px;width:1px;height:1px;background:#a3a3a3;border-radius:50%"></div>
<span class="t" style="transform:scaleX(0.840);left:576.7px;top:495.3px;font-size:10.5px;line-height:16px;color:#808080;">2</span>
<div style="left:606.65px;top:488.85px;width:1.3px;height:1.3px;background:#a3a3a3;border-radius:50%"></div>
<span class="t" style="transform:scaleX(0.840);left:604.8px;top:495.3px;font-size:10.5px;line-height:16px;color:#808080;">3</span>
<div style="left:633.75px;top:487.8px;width:3.4px;height:3.4px;background:#a3a3a3;border-radius:50%"></div>
<span class="t" style="transform:scaleX(0.840);left:633.0px;top:495.3px;font-size:10.5px;line-height:16px;color:#808080;">5</span>
<div style="left:661.1px;top:487.0px;width:5px;height:5px;background:#a3a3a3;border-radius:50%"></div>
<span class="t" style="transform:scaleX(0.840);left:661.1px;top:495.3px;font-size:10.5px;line-height:16px;color:#808080;">7</span>
<div style="left:687.75px;top:485.5px;width:8px;height:8px;background:#a3a3a3;border-radius:50%"></div>
<span class="t" style="transform:scaleX(0.840);left:686.8px;top:495.3px;font-size:10.5px;line-height:16px;color:#808080;">10</span>
<div style="left:544.75px;top:518.75px;width:12.5px;height:12.5px;background:#a3a3a3;border-radius:50%"></div>
<div style="left:570.9px;top:516.75px;width:16.5px;height:16.5px;background:#a3a3a3;border-radius:50%"></div>
<div style="left:596.8px;top:514.5px;width:21px;height:21px;background:#a3a3a3;border-radius:50%"></div>
<div style="left:624.95px;top:514.5px;width:21px;height:21px;background:#a3a3a3;border-radius:50%"></div>
<div style="left:653.1px;top:514.5px;width:21px;height:21px;background:#a3a3a3;border-radius:50%"></div>
<div style="left:681.25px;top:514.5px;width:21px;height:21px;background:#a3a3a3;border-radius:50%"></div>
<div style="left:537px;top:530px;width:169px;height:17px;background:linear-gradient(rgba(224,226,230,0),rgba(216,218,222,.95) 70%)"></div>
<span class="t" style="transform:scaleX(0.840);left:546.1px;top:531.3px;font-size:10.5px;line-height:16px;color:#7c7c7c;">15</span>
<span class="t" style="transform:scaleX(0.840);left:574.2px;top:531.3px;font-size:10.5px;line-height:16px;color:#7c7c7c;">20</span>
<span class="t" style="transform:scaleX(0.840);left:602.4px;top:531.3px;font-size:10.5px;line-height:16px;color:#7c7c7c;">30</span>
<span class="t" style="transform:scaleX(0.840);left:630.5px;top:531.3px;font-size:10.5px;line-height:16px;color:#7c7c7c;">50</span>
<span class="t" style="transform:scaleX(0.840);left:656.2px;top:531.3px;font-size:10.5px;line-height:16px;color:#7c7c7c;">100</span>
<span class="t" style="transform:scaleX(0.840);left:684.4px;top:531.3px;font-size:10.5px;line-height:16px;color:#7c7c7c;">150</span>
<div style="left:706.5px;top:476px;width:11px;height:71px;background:#d6d8dc"></div>
<div style="left:707px;top:476.5px;width:10.5px;height:10px;background:#f8fafd;border:1px solid #c2c4c8;border-radius:2.5px"></div>
<svg style="left:709.25px;top:479.5px;" width="6" height="4" viewBox="0 0 6 4"><path d="M0 3.6 L6 3.6 L3 0 Z" fill="#4a4a4a"/></svg>
<div style="left:707px;top:536.5px;width:10.5px;height:10px;background:#f8fafd;border:1px solid #c2c4c8;border-radius:2.5px"></div>
<svg style="left:709.25px;top:539.9px;" width="6" height="4" viewBox="0 0 6 4"><path d="M0 0 L6 0 L3 3.6 Z" fill="#4a4a4a"/></svg>
<div style="left:707px;top:487px;width:10.5px;height:31px;background:#f6f8fc;border:1px solid #cdcdcd;border-radius:2.5px"></div>
<svg style="left:709.5px;top:499.5px;" width="6" height="6" viewBox="0 0 6 6"><path d="M0 .5 H6 M0 3 H6 M0 5.5 H6" stroke="#9a9a9a" stroke-width="1"/></svg>
<div style="left:536.0px;top:549.7px;width:17px;height:14px;background:#eef0f4;border:1px solid #c9c9c9"></div>
<svg style="left:540.5px;top:553.2px;" width="10" height="7" viewBox="0 0 10 7"><path d="M0 0 L3 3.5 L0 7 Z" fill="#9a9a9a"/><path d="M4.5 1 H10 M4.5 3.5 H10 M4.5 6 H10" stroke="#a8a8a8" stroke-width="1.2"/></svg>
<div style="left:553.5px;top:550.2px;width:25.0px;height:14px;background:#dddee1;border:1px solid #c6c6c6"></div>
<div style="left:578px;top:550.2px;width:25.0px;height:14px;background:#dddee1;border:1px solid #c6c6c6"></div>
<div style="left:643px;top:550.2px;width:25.5px;height:14px;background:#dddee1;border:1px solid #c6c6c6"></div>
<div style="left:668px;top:550.2px;width:25.0px;height:14px;background:#dddee1;border:1px solid #c6c6c6"></div>
<div style="left:692.5px;top:550.2px;width:25.5px;height:14px;background:#dddee1;border:1px solid #c6c6c6"></div>
<div style="left:602.5px;top:549.2px;width:41px;height:19px;background:#f3f6fb;border:1px solid #c6c6c6;border-bottom:none"></div>
<svg style="left:558.5px;top:552.2px;" width="15" height="11.5" viewBox="0 0 15 11.5"><ellipse cx="7.5" cy="8.5" rx="7" ry="7" fill="#c2c3c6" stroke="#b0b1b4" stroke-width="1"/><circle cx="7.5" cy="8.5" r="2.8" fill="#e4e5e7"/></svg>
<svg style="left:582px;top:552.2px;" width="18" height="11.5" viewBox="0 0 18 11.5"><path d="M0 2 H18 M0 6 H18 M0 10 H18" stroke="#bfc0c4" stroke-width="2.6"/><rect x="1" y="0" width="3" height="11.5" fill="#dcdde0"/></svg>
<svg style="left:607.5px;top:553.2px;" width="14" height="14" viewBox="0 0 14 14"><rect x="0.0" y="0.0" width="3.8" height="3.8" fill="#00a0e0"/><rect x="4.4" y="0.0" width="3.8" height="3.8" fill="#e03030"/><rect x="8.8" y="0.0" width="3.8" height="3.8" fill="#ffd000"/><rect x="0.0" y="4.4" width="3.8" height="3.8" fill="#1040c0"/><rect x="4.4" y="4.4" width="3.8" height="3.8" fill="#d01010"/><rect x="8.8" y="4.4" width="3.8" height="3.8" fill="#ffe000"/><rect x="0.0" y="8.8" width="3.8" height="3.8" fill="#40a020"/><rect x="4.4" y="8.8" width="3.8" height="3.8" fill="#e08000"/><rect x="8.8" y="8.8" width="3.8" height="3.8" fill="#111111"/><rect x="4.6" y="4.6" width="3.4" height="3.4" fill="#3a7be0" stroke="#d01010" stroke-width="1"/></svg>
<svg style="left:647.5px;top:551.7px;" width="16" height="12" viewBox="0 0 16 12"><rect x="0.5" y="0.5" width="6" height="4.5" fill="#d0d1d4" stroke="#a9aaae"/><rect x="9.5" y="0.5" width="6" height="4.5" fill="#d0d1d4" stroke="#a9aaae"/><rect x="5" y="7.5" width="6" height="4.5" fill="#d0d1d4" stroke="#a9aaae"/><path d="M3.5 5 V6.5 H12.5 V5 M8 6.5 V7.5" stroke="#a9aaae" fill="none"/></svg>
<svg style="left:672.5px;top:552.2px;" width="16" height="12" viewBox="0 0 16 12"><path d="M1 4 H6 L7.5 2 H15 V11.5 H1 Z" fill="#c9cacd" stroke="#a9aaae"/><rect x="5" y="5.5" width="10" height="6" fill="#b4b5b9"/></svg>
<svg style="left:697px;top:553.7px;" width="17" height="10" viewBox="0 0 17 10"><rect x="0.5" y="0.5" width="16" height="9" fill="#c9cacd" stroke="#a4a5a9"/><rect x="3.5" y="2.5" width="10" height="5" fill="#e4e5e7"/><path d="M2.5 0.5 V9.5 M14.5 0.5 V9.5" stroke="#a4a5a9"/></svg>
<span class="t" style="transform:scaleX(0.701);left:626.0px;top:552.3px;font-size:9.5px;line-height:14px;color:#4a4a4a;font-weight:500;"><span class="k">カ</span>ラ</span>
<div style="left:536px;top:568px;width:4px;height:87px;background:linear-gradient(90deg,#dcdcdc,#a9a9a9 60%,#d0d0d0)"></div>
<div style="left:713.5px;top:568px;width:4px;height:87px;background:linear-gradient(90deg,#d0d0d0,#a9a9a9 40%,#dcdcdc)"></div>
<div style="left:540px;top:569.5px;width:136.5px;height:17.5px;background:linear-gradient(#fbfcfe,#eef1f6);border:1px solid #c3c7cc;border-radius:2.5px"></div>
<span class="t" style="transform:scaleX(0.788);left:568.0px;top:568.5px;font-size:12.5px;line-height:19px;color:#222;">追加<span class="k">カラーセッ</span>ト</span>
<svg style="left:666px;top:576px;" width="8" height="5" viewBox="0 0 8 5"><path d="M0 0 L8 0 L4 4.5 Z" fill="#555"/></svg>
<svg style="left:679.5px;top:570px;" width="14" height="16" viewBox="0 0 14 16"><path d="M2.2 0.8 C0.2 2 0.2 5.2 2.6 6.2 L2.6 15 L5.4 15 L5.4 6.2 C7.8 5.2 7.8 2 5.8 0.8 L5.8 3.6 L4 4.6 L2.2 3.6 Z" fill="#8b8b8b" stroke="#555" stroke-width=".7"/><path d="M9 0.8 L9 5 L7.6 6.5 L8.6 15 L12.4 15 L13.4 6.5 L12 5 L12 0.8 L11 0.8 L11 4.2 L10 4.2 L10 0.8 Z" fill="#555"/></svg>
<svg style="left:697px;top:570.5px;" width="15" height="16" viewBox="0 0 15 16"><path d="M2 5 L5.5 1.5 L9 5 V15 H2 Z" fill="#bdbdbd" stroke="#555" stroke-width="1"/><rect x="4.2" y="0.6" width="2.6" height="2.4" fill="#777"/><rect x="7" y="8" width="7.4" height="7" fill="#f0f0f0" stroke="#555" stroke-width="1"/><path d="M7 10.3 H14.4 M7 12.6 H14.4 M9.5 8 V15 M12 8 V15" stroke="#666" stroke-width=".8"/><path d="M3.5 7 H7 M3.5 9.5 H6 M3.5 12 H6" stroke="#666" stroke-width="1"/></svg>
<div style="left:540.5px;top:587.5px;width:161.5px;height:48.5px;background:#8a8a8a"></div>
<div style="left:541.0px;top:588px;width:15.5px;height:15.5px;background:#ff0000"></div>
<div style="left:557.05px;top:588px;width:15.5px;height:15.5px;background:#ffff00"></div>
<div style="left:573.1px;top:588px;width:15.5px;height:15.5px;background:#00ff00"></div>
<div style="left:589.15px;top:588px;width:15.5px;height:15.5px;background:#00ffff"></div>
<div style="left:605.2px;top:588px;width:15.5px;height:15.5px;background:#0000ff"></div>
<div style="left:621.25px;top:588px;width:15.5px;height:15.5px;background:#ff00ff"></div>
<div style="left:637.3px;top:588px;width:15.5px;height:15.5px;background:#000000"></div>
<div style="left:653.35px;top:588px;width:15.5px;height:15.5px;background:#e60012"></div>
<div style="left:669.4px;top:588px;width:15.5px;height:15.5px;background:#fff100"></div>
<div style="left:685.45px;top:588px;width:15.5px;height:15.5px;background:#009944"></div>
<div style="left:541.0px;top:604px;width:15.5px;height:15.5px;background:#00a0e9"></div>
<div style="left:557.05px;top:604px;width:15.5px;height:15.5px;background:#1d2088"></div>
<div style="left:573.1px;top:604px;width:15.5px;height:15.5px;background:#e4007f"></div>
<div style="left:589.15px;top:604px;width:15.5px;height:15.5px;background-color:#fff;background-image:conic-gradient(#fff 25%,#808080 0 50%,#fff 0 75%,#808080 0);background-size:7.75px 7.75px"></div>
<div style="left:605.2px;top:604px;width:15.5px;height:15.5px;background:#ffffff"></div>
<div style="left:621.25px;top:604px;width:15.5px;height:15.5px;background:#f2f2f2"></div>
<div style="left:637.3px;top:604px;width:15.5px;height:15.5px;background:#e6e6e6"></div>
<div style="left:653.35px;top:604px;width:15.5px;height:15.5px;background:#d9d9d9"></div>
<div style="left:669.4px;top:604px;width:15.5px;height:15.5px;background:#cccccc"></div>
<div style="left:685.45px;top:604px;width:15.5px;height:15.5px;background:#bfbfbf"></div>
<div style="left:541.0px;top:620px;width:15.5px;height:15.5px;background:#b3b3b3"></div>
<div style="left:557.05px;top:620px;width:15.5px;height:15.5px;background:#a6a6a6"></div>
<div style="left:573.1px;top:620px;width:15.5px;height:15.5px;background:#999999"></div>
<div style="left:589.15px;top:620px;width:15.5px;height:15.5px;background:#8c8c8c"></div>
<div style="left:605.2px;top:620px;width:15.5px;height:15.5px;background:#808080"></div>
<div style="left:621.25px;top:620px;width:15.5px;height:15.5px;background:#737373"></div>
<div style="left:637.3px;top:620px;width:15.5px;height:15.5px;background:#666666"></div>
<div style="left:653.35px;top:620px;width:15.5px;height:15.5px;background:#595959"></div>
<div style="left:669.4px;top:620px;width:15.5px;height:15.5px;background:#4d4d4d"></div>
<div style="left:685.45px;top:620px;width:15.5px;height:15.5px;background:#404040"></div>
<div style="left:556.65px;top:588px;width:0.8px;height:47.5px;background:rgba(255,255,255,.28)"></div>
<div style="left:572.7px;top:588px;width:0.8px;height:47.5px;background:rgba(255,255,255,.28)"></div>
<div style="left:588.75px;top:588px;width:0.8px;height:47.5px;background:rgba(255,255,255,.28)"></div>
<div style="left:604.8000000000001px;top:588px;width:0.8px;height:47.5px;background:rgba(255,255,255,.28)"></div>
<div style="left:620.85px;top:588px;width:0.8px;height:47.5px;background:rgba(255,255,255,.28)"></div>
<div style="left:636.9000000000001px;top:588px;width:0.8px;height:47.5px;background:rgba(255,255,255,.28)"></div>
<div style="left:652.95px;top:588px;width:0.8px;height:47.5px;background:rgba(255,255,255,.28)"></div>
<div style="left:669.0px;top:588px;width:0.8px;height:47.5px;background:rgba(255,255,255,.28)"></div>
<div style="left:685.0500000000001px;top:588px;width:0.8px;height:47.5px;background:rgba(255,255,255,.28)"></div>
<div style="left:541px;top:603.6px;width:160.5px;height:0.8px;background:rgba(255,255,255,.28)"></div>
<div style="left:541px;top:619.6px;width:160.5px;height:0.8px;background:rgba(255,255,255,.28)"></div>
<div style="left:556.5px;top:587.5px;width:17px;height:16.5px;border:1px solid #e00000"></div>
<div style="left:557.5px;top:588.5px;width:15px;height:14.5px;border:1px solid #f4f4f4"></div>
<div style="left:558.5px;top:589.5px;width:13px;height:12.5px;border:1px solid #9a9a30"></div>
<div style="left:702.5px;top:588px;width:11px;height:48px;background:#d6d8dc"></div>
<div style="left:703px;top:588.5px;width:10.5px;height:10px;background:#f8fafd;border:1px solid #c2c4c8;border-radius:2.5px"></div>
<svg style="left:705.25px;top:591.5px;" width="6" height="4" viewBox="0 0 6 4"><path d="M0 3.6 L6 3.6 L3 0 Z" fill="#4a4a4a"/></svg>
<div style="left:703px;top:625.5px;width:10.5px;height:10px;background:#f8fafd;border:1px solid #c2c4c8;border-radius:2.5px"></div>
<svg style="left:705.25px;top:628.9px;" width="6" height="4" viewBox="0 0 6 4"><path d="M0 0 L6 0 L3 3.6 Z" fill="#4a4a4a"/></svg>
<div style="left:703px;top:599px;width:10.5px;height:10px;background:#f6f8fc;border:1px solid #cdcdcd;border-radius:2.5px"></div>
<div style="left:540px;top:636px;width:173.5px;height:19px;background:#f3f6fb"></div>
<div style="left:541px;top:645px;width:6.5px;height:6.5px;background:#a00000;border:1px solid #600000"></div>
<div style="left:569.5px;top:645px;width:6.5px;height:6.5px;background:#00a000;border:1px solid #006000"></div>
<div style="left:598px;top:645px;width:6.5px;height:6.5px;background:#0000d0;border:1px solid #000070"></div>
<svg style="left:664px;top:638px;" width="12" height="16" viewBox="0 0 12 16"><path d="M1 1 L5 4 L3 5.5 Z" fill="#333"/><path d="M3.5 4 L6 8" stroke="#333" stroke-width="1.2"/><rect x="2.5" y="8" width="9" height="7" fill="#e8e8e8" stroke="#444" stroke-width="1"/><path d="M2.5 10.3 H11.5 M2.5 12.6 H11.5 M5.5 8 V15 M8.5 8 V15" stroke="#555" stroke-width=".8"/></svg>
<svg style="left:681px;top:638px;" width="13" height="16" viewBox="0 0 13 16"><path d="M5 0.5 C7 4 9.5 6 9.5 9 A4.5 4.5 0 0 1 0.5 9 C0.5 6 3 4 5 0.5 Z" fill="#555" stroke="#333" stroke-width=".8"/><path d="M9.5 9.5 V15 M6.8 12.2 H12.2" stroke="#222" stroke-width="1.8"/></svg>
<svg style="left:698px;top:637.5px;" width="13" height="16" viewBox="0 0 13 16"><ellipse cx="6.5" cy="4.2" rx="5.8" ry="2.4" fill="#a4a4a4" stroke="#555" stroke-width="1.2"/><path d="M3.5 2.6 C3.5 0.2 9.5 0.2 9.5 2.6" fill="none" stroke="#555" stroke-width="1"/><path d="M1.3 5.5 L2.8 14.5 C4 15.8 9 15.8 10.2 14.5 L11.7 5.5" fill="#f1f1f1" stroke="#555" stroke-width="1"/><path d="M2 9 C4 10.3 9 10.3 11 9" fill="none" stroke="#555" stroke-width=".8"/></svg>
<div style="left:719px;top:43px;width:13px;height:612px;background:#e8e8e8"></div>
<div style="left:732px;top:43px;width:1px;height:612px;background:#cecece"></div>
<div style="left:719.5px;top:60px;width:13px;height:1px;background:#cfcfcf"></div>
<svg style="left:721.2px;top:46.4px;" width="9.6" height="11" viewBox="0 0 9.6 11"><path d="M4.8 0 L3.4 0 L0 5.5 L3.4 11 L4.8 11 L3 5.5 Z" fill="#9c9c9c"/><path d="M4.8 0 L3.4 0 L0 5.5 L3.4 11 L4.8 11 L3 5.5 Z" fill="#9c9c9c" transform="translate(4.6 0)"/></svg>
<div style="left:733px;top:43px;width:209px;height:18px;background:#e8e8e8;border-bottom:1px solid #c6c6c6;border-right:1px solid #d4d4d4"></div>
<svg style="left:735px;top:48.2px;" width="8" height="7.4" viewBox="0 0 8 7.4"><path d="M0.9 0 V7.4 M3.8 0 V7.4 M6.7 0 V7.4" stroke="#c2c2c2" stroke-width="1.7"/></svg>
<svg style="left:911.5px;top:46.4px;" width="5" height="11" viewBox="0 0 5 11"><path d="M0 0 L1.4 0 L4.8 5.5 L1.4 11 L0 11 L1.8 5.5 Z" fill="#9c9c9c"/></svg>
<svg style="left:931px;top:46.4px;" width="9.6" height="11" viewBox="0 0 9.6 11"><path d="M0 0 L1.4 0 L4.8 5.5 L1.4 11 L0 11 L1.8 5.5 Z" fill="#9c9c9c"/><path d="M0 0 L1.4 0 L4.8 5.5 L1.4 11 L0 11 L1.8 5.5 Z" fill="#9c9c9c" transform="translate(4.6 0)"/></svg>
<div style="left:942px;top:43px;width:13px;height:612px;background:#e8e8e8"></div>
<div style="left:943px;top:61px;width:1px;height:594px;background:#cfcfcf"></div>
<svg style="left:944.7px;top:46.4px;" width="9.6" height="11" viewBox="0 0 9.6 11"><path d="M4.8 0 L3.4 0 L0 5.5 L3.4 11 L4.8 11 L3 5.5 Z" fill="#9c9c9c"/><path d="M4.8 0 L3.4 0 L0 5.5 L3.4 11 L4.8 11 L3 5.5 Z" fill="#9c9c9c" transform="translate(4.6 0)"/></svg>
<div style="left:942px;top:60px;width:13px;height:1px;background:#c6c6c6"></div>
<div style="left:733px;top:61px;width:210px;height:594px;background:#f3f6fb;border-right:2px solid #c4c4c6;border-left:1px solid #cfcfcf"></div>
<div style="left:733.5px;top:63px;width:17px;height:14px;background:#eef0f4;border:1px solid #c9c9c9"></div>
<svg style="left:738px;top:66.5px;" width="10" height="7" viewBox="0 0 10 7"><path d="M0 0 L3 3.5 L0 7 Z" fill="#9a9a9a"/><path d="M4.5 1 H10 M4.5 3.5 H10 M4.5 6 H10" stroke="#a8a8a8" stroke-width="1.2"/></svg>
<div style="left:863.5px;top:63px;width:78px;height:14px;background:#ebebeb;border:1px solid #c6c6c6"></div>
<div style="left:814px;top:63px;width:25px;height:14.5px;background:#dddee1;border:1px solid #c6c6c6"></div>
<div style="left:838.5px;top:63px;width:25.5px;height:14.5px;background:#dddee1;border:1px solid #c6c6c6"></div>
<div style="left:751px;top:62.5px;width:63.5px;height:18.5px;background:#f3f6fb;border:1px solid #c6c6c6;border-bottom:none"></div>
<svg style="left:754px;top:65.5px;" width="15" height="12" viewBox="0 0 15 12"><rect x="4.5" y="3.5" width="9" height="7" fill="#ccc" stroke="#888" stroke-width="1"/><rect x="1" y="1" width="10.5" height="8" rx="1" fill="#fff" stroke="#e01010" stroke-width="1.6"/></svg>
<span class="t" style="transform:scaleX(0.799);left:772.0px;top:65.0px;font-size:9.5px;line-height:14px;color:#333;font-weight:500;"><span class="k">ナビゲータ</span>ー</span>
<svg style="left:819px;top:66px;" width="15" height="11" viewBox="0 0 15 11"><path d="M1 11 V5.5 Q7.5 -2 14 5.5 V11" fill="#c6c7ca" stroke="#b0b1b5"/><circle cx="7.5" cy="7.5" r="3.2" fill="#e6e7e9" stroke="#b4b5b9"/></svg>
<svg style="left:844px;top:65.5px;" width="14" height="12" viewBox="0 0 14 12"><rect x="0.5" y="0.5" width="13" height="11" fill="#e6e7ea" stroke="#b4b5b8"/><rect x="0.5" y="0.5" width="13" height="2.5" fill="#8d8e92"/><path d="M2 11 L6 7 L8 9 L10 6.5 L13 9" fill="none" stroke="#c4c5c8"/></svg>
<div style="left:733.5px;top:81px;width:208px;height:35px;background:#f5f7fb"></div>
<svg style="left:737px;top:82.5px;" width="68" height="11" viewBox="0 0 68 11"><rect x="0.5" y="0.5" width="67" height="10" fill="#f4f6f9" stroke="#c2c4c8"/><path d="M1 10 L67 1 L67 10 Z" fill="#a9abae"/></svg>
<div style="left:775px;top:81.3px;width:3.5px;height:15px;background:#d4d5d8;border:1px solid #b4b6b9"></div>
<svg style="left:737px;top:100px;" width="68" height="11" viewBox="0 0 68 11"><rect x="0.5" y="0.5" width="67" height="10" fill="#f4f6f9" stroke="#c2c4c8"/><path d="M1 1 C10 2 22 10 33 10 L1 10 Z M34 10 C36 5 38 1.5 42 1 L52 1 C58 3 62 8 67 10 Z" fill="#a9abae"/></svg>
<div style="left:769.8px;top:97px;width:3.5px;height:17.5px;background:#d4d5d8;border:1px solid #b4b6b9"></div>
<span class="t" style="transform:scaleX(0.799);left:824.0px;top:80.0px;font-size:10.5px;line-height:16px;color:#222;">100.0</span>
<span class="t" style="transform:scaleX(0.821);left:833.0px;top:98.0px;font-size:10.5px;line-height:16px;color:#222;">0.0</span>
<svg style="left:847.5px;top:80.5px;" width="14" height="14" viewBox="0 0 14 14"><path d="M9.5 9.5 L13 13" stroke="#1a1a1a" stroke-width="2.6" stroke-linecap="round"/><circle cx="6" cy="6" r="5.2" fill="#f0f0f0" stroke="#333" stroke-width="1.1"/><circle cx="6" cy="6" r="3.7" fill="#fafafa" stroke="#9a9a9a" stroke-width=".9"/><path d="M3.6 6 H8.4" stroke="#222" stroke-width="1.5"/></svg>
<svg style="left:865.5px;top:80.5px;" width="14" height="14" viewBox="0 0 14 14"><path d="M9.5 9.5 L13 13" stroke="#1a1a1a" stroke-width="2.6" stroke-linecap="round"/><circle cx="6" cy="6" r="5.2" fill="#f0f0f0" stroke="#333" stroke-width="1.1"/><circle cx="6" cy="6" r="3.7" fill="#fafafa" stroke="#9a9a9a" stroke-width=".9"/><path d="M3.6 6 H8.4" stroke="#222" stroke-width="1.5"/><path d="M6 3.6 V8.4" stroke="#222" stroke-width="1.5"/></svg>
<svg style="left:883px;top:81.5px;" width="14.3" height="13" viewBox="0 0 14.3 13"><rect x="0" y="0" width="14.3" height="13" fill="#1e1e1e"/><rect x="2.4" y="2.4" width="9.5" height="8.2" fill="none" stroke="#c8c8c8" stroke-width=".8"/></svg>
<div style="left:901px;top:82px;width:1px;height:30px;background:#d4d6da"></div>
<svg style="left:904.4px;top:81.5px;" width="15" height="13" viewBox="0 0 15 13"><rect x="3.5" y="4.5" width="11" height="8" fill="#fafafa" stroke="#555"/><rect x="0.5" y="0.5" width="10" height="7.5" fill="#fafafa" stroke="#333"/><rect x="0" y="0" width="11" height="2" fill="#222"/><path d="M5.5 3.5 L10.5 8.8" stroke="#111" stroke-width="1.6"/><path d="M12.2 10.6 L7.8 9.6 L11 6.4 Z" fill="#111"/></svg>
<svg style="left:922.3px;top:81.5px;" width="15" height="13.5" viewBox="0 0 15 13.5"><rect x="0.5" y="0.5" width="14" height="12.5" fill="#fafafa" stroke="#333"/><rect x="0" y="0" width="15" height="2" fill="#222"/><path d="M3 3.8 L10.5 9.8" stroke="#111" stroke-width="1.7"/><path d="M13 11.8 L8 10.8 L11 7.2 Z" fill="#111"/></svg>
<svg style="left:847.3px;top:98.3px;" width="15" height="13.5" viewBox="0 0 15 13.5"><path d="M3.6 8 V6.6 A4.9 4.9 0 0 1 13.4 6.6 Q13.4 9 12.3 10.6" fill="none" stroke="#1a1a1a" stroke-width="2.6"/><path d="M0.2 7.3 L7.2 7.3 L3.7 12.8 Z" fill="#1a1a1a"/></svg>
<svg style="left:865px;top:98.3px;" width="15" height="13.5" viewBox="0 0 15 13.5"><g transform="translate(15 0) scale(-1 1)"><path d="M3.6 8 V6.6 A4.9 4.9 0 0 1 13.4 6.6 Q13.4 9 12.3 10.6" fill="none" stroke="#1a1a1a" stroke-width="2.6"/><path d="M0.2 7.3 L7.2 7.3 L3.7 12.8 Z" fill="#1a1a1a"/></g></svg>
<svg style="left:882px;top:97.6px;" width="16" height="16" viewBox="0 0 14 14"><path d="M12.34 7.81 A5.4 5.4 0 0 1 11.30 10.27" stroke="#4a4a4a" stroke-width="1.6" fill="none"/><path d="M10.20 11.35 A5.4 5.4 0 0 1 7.73 12.35" stroke="#4a4a4a" stroke-width="1.6" fill="none"/><path d="M6.19 12.34 A5.4 5.4 0 0 1 3.73 11.30" stroke="#4a4a4a" stroke-width="1.6" fill="none"/><path d="M2.65 10.20 A5.4 5.4 0 0 1 1.65 7.73" stroke="#4a4a4a" stroke-width="1.6" fill="none"/><path d="M1.66 6.19 A5.4 5.4 0 0 1 2.70 3.73" stroke="#4a4a4a" stroke-width="1.6" fill="none"/><path d="M3.80 2.65 A5.4 5.4 0 0 1 6.27 1.65" stroke="#4a4a4a" stroke-width="1.6" fill="none"/><path d="M7.81 1.66 A5.4 5.4 0 0 1 10.27 2.70" stroke="#4a4a4a" stroke-width="1.6" fill="none"/><path d="M11.35 3.80 A5.4 5.4 0 0 1 12.35 6.27" stroke="#4a4a4a" stroke-width="1.6" fill="none"/></svg>
<svg style="left:904.5px;top:98px;" width="15" height="15" viewBox="0 0 15 15"><path d="M7.5 5 V15" stroke="#555" stroke-dasharray="1.6 1.4"/><path d="M2.5 7 A5 5 0 0 1 12 5.5" fill="none" stroke="#1a1a1a" stroke-width="2"/><path d="M13.8 3.6 L13 9 L9 6.2 Z" fill="#1a1a1a"/><path d="M0.8 14 L5.8 8.5 V14 Z" fill="#f4f4f4" stroke="#555" stroke-width=".9"/><path d="M14.2 14.3 L9 8.2 V14.3 Z" fill="#222"/></svg>
<svg style="left:922px;top:98px;" width="15.5" height="15" viewBox="0 0 15.5 15"><path d="M5.5 8 H15.5" stroke="#555" stroke-dasharray="1.6 1.4"/><path d="M7 3 A4.6 4.6 0 1 0 7.5 12" fill="none" stroke="#1a1a1a" stroke-width="2"/><path d="M5 0.2 L10 2.6 L6 5.8 Z" fill="#1a1a1a"/><path d="M8.6 6.4 H15.2 L11.9 1.4 Z" fill="#222"/><path d="M8.6 9.6 H15.2 L11.9 14.4 Z" fill="#f4f4f4" stroke="#555" stroke-width=".9"/></svg>
<div style="left:939.3px;top:81.3px;width:2.8px;height:33px;background:linear-gradient(90deg,#c4c4c4,#8e8e8e 50%,#b8b8b8)"></div>
<div style="left:733.5px;top:118px;width:17px;height:14px;background:#eef0f4;border:1px solid #c9c9c9"></div>
<svg style="left:738px;top:121.5px;" width="10" height="7" viewBox="0 0 10 7"><path d="M0 0 L3 3.5 L0 7 Z" fill="#9a9a9a"/><path d="M4.5 1 H10 M4.5 3.5 H10 M4.5 6 H10" stroke="#a8a8a8" stroke-width="1.2"/></svg>
<div style="left:801px;top:118px;width:140.5px;height:14px;background:#ebebeb;border:1px solid #c6c6c6"></div>
<div style="left:751px;top:117.5px;width:50.5px;height:17px;background:#f3f6fb;border:1px solid #c6c6c6;border-bottom:none"></div>
<svg style="left:754px;top:119.5px;" width="15" height="13.5" viewBox="0 0 15 13.5"><path d="M1 10.3 Q7.5 7 14 10.3 Q7.5 13.6 1 10.3 Z M1 6.8 Q7.5 3.5 14 6.8 Q7.5 10.1 1 6.8 Z M1 3.3 Q7.5 0 14 3.3 Q7.5 6.6 1 3.3 Z" fill="#ececec" stroke="#2e2e2e" stroke-width="1.2"/></svg>
<span class="t" style="transform:scaleX(0.812);left:772.0px;top:119.3px;font-size:9.5px;line-height:14px;color:#333;font-weight:500;"><span class="k">レイヤ</span>ー</span>
<div style="left:734px;top:136.3px;width:103px;height:17.3px;background:linear-gradient(#fbfcfe,#eef1f6);border:1px solid #c3c7cc;border-radius:2.5px"></div>
<span class="t" style="transform:scaleX(0.884);left:768.5px;top:135.3px;font-size:13px;line-height:20px;color:#222;">通常</span>
<svg style="left:826px;top:143px;" width="8" height="5" viewBox="0 0 8 5"><path d="M0 0 L8 0 L4 4.5 Z" fill="#555"/></svg>
<div style="left:843px;top:140.5px;width:65px;height:8px;background-color:#fff;background-image:conic-gradient(#fff 25%,#c9c9c9 0 50%,#fff 0 75%,#c9c9c9 0);background-size:7.5px 7.5px;border:1px solid #c0c2c6"></div>
<div style="left:844px;top:141.5px;width:63px;height:6px;background:linear-gradient(90deg,rgba(190,190,190,0),rgba(165,165,165,.95))"></div>
<div style="left:906.5px;top:137px;width:3px;height:17px;background:#c9cacd;border:1px solid #a6a8ab"></div>
<span class="t" style="transform:scaleX(0.827);left:915.0px;top:136.5px;font-size:10.5px;line-height:16px;color:#222;">100</span>
<svg style="left:931.5px;top:138.5px;" width="9" height="13" viewBox="0 0 9 13"><path d="M0.5 5 L4.5 0.5 L8.5 5 Z M0.5 8 L4.5 12.5 L8.5 8 Z" fill="#a0a0a0"/></svg>
<div style="left:734px;top:155.2px;width:30.5px;height:17.3px;background:linear-gradient(#fbfcfe,#eef1f6);border:1px solid #c3c7cc;border-radius:2.5px"></div>
<div style="left:736px;top:157.3px;width:15px;height:13.2px;background:#f8f9fc;border:1px solid #b9bcc2"></div>
<svg style="left:755px;top:162px;" width="7" height="4" viewBox="0 0 7 4"><path d="M0 0 L7 0 L3.5 4 Z" fill="#444"/></svg>
<svg style="left:767px;top:158.5px;" width="15" height="10" viewBox="0 0 15 10"><ellipse cx="7.5" cy="5" rx="7" ry="4.5" fill="#444"/><ellipse cx="7.5" cy="3.6" rx="5" ry="2" fill="#ddd"/></svg>
<svg style="left:786px;top:156px;" width="10" height="16" viewBox="0 0 10 16"><path d="M3.2 15 L4 6 H6 L6.8 15 Z" fill="#777" stroke="#444" stroke-width=".7"/><rect x="3.3" y="3.2" width="3.4" height="2.8" fill="#555"/><path d="M5 3 L5 1" stroke="#444"/><path d="M0 1 L3 3.5 M10 1 L7 3.5 M0 5 L3 4.5 M10 5 L7 4.5" stroke="#bbb" stroke-width=".9"/></svg>
<svg style="left:804.5px;top:155.5px;" width="9" height="17" viewBox="0 0 9 17"><path d="M1 4 L4.5 0.5 L8 4 V10 L4.5 16.5 L1 10 Z" fill="#2f8fdd" stroke="#1b5c99" stroke-width=".7"/><path d="M1 10 L4.5 16.5 L8 10 Z" fill="#ffd84a" stroke="#b8942a" stroke-width=".6"/><path d="M3.6 14.2 L4.5 16.5 L5.4 14.2 Z" fill="#333"/><path d="M4.5 1 V10" stroke="#8cc4f2" stroke-width="1.4"/></svg>
<svg style="left:821.5px;top:156.5px;" width="11" height="15" viewBox="0 0 11 15"><path d="M2.6 7 V4.4 A2.9 2.9 0 0 1 8.4 4.4 V7" fill="none" stroke="#333" stroke-width="1.6"/><rect x="0.8" y="6.6" width="9.4" height="7.8" fill="#555" stroke="#222" stroke-width=".8"/><rect x="4.8" y="9" width="1.4" height="3" fill="#ddd"/></svg>
<svg style="left:838px;top:156px;" width="16" height="16" viewBox="0 0 16 16"><path d="M2.3 5 V3.4 A2 2 0 0 1 6.3 3.4 V5" fill="none" stroke="#333" stroke-width="1.3"/><rect x="1" y="4.8" width="6.6" height="5" fill="#fff" stroke="#333" stroke-width="1"/><rect x="8" y="8" width="7.5" height="7.5" fill="#fff" stroke="#555" stroke-width=".8"/><rect x="8" y="8" width="3.7" height="3.7" fill="#666"/><rect x="11.7" y="11.7" width="3.8" height="3.8" fill="#666"/></svg>
<div style="left:855px;top:155.5px;width:27.5px;height:17px;background:#eceef2;border:1px solid #c6c9ce;border-radius:2.5px"></div>
<div style="left:884px;top:155.5px;width:27.5px;height:17px;background:#eceef2;border:1px solid #c6c9ce;border-radius:2.5px"></div>
<svg style="left:858px;top:157.5px;" width="22" height="14" viewBox="0 0 22 14"><rect x="0.5" y="0.5" width="13" height="12" fill="#dfe1e5" stroke="#c3c5c9"/><path d="M7 2 L8.5 5.5 L12 5.8 L9.3 8 L10.2 11.5 L7 9.6 L3.8 11.5 L4.7 8 L2 5.8 L5.5 5.5 Z" fill="#f3f4f6"/><path d="M10 8.5 L14.5 13 M14.5 8.5 L10 13" stroke="#b4b6ba" stroke-width="1.5"/><path d="M16 5 L22 5 L19 8.5 Z" fill="#bcbec2"/></svg>
<svg style="left:887px;top:157.5px;" width="22" height="14" viewBox="0 0 22 14"><path d="M0.5 0.5 H13.5 L0.5 12.5 Z" fill="#e4e6ea" stroke="#c3c5c9"/><path d="M2 1 L13 1 M2 3 L4 3" stroke="#c9cbcf"/><path d="M10 8.5 L14.5 13 M14.5 8.5 L10 13" stroke="#b4b6ba" stroke-width="1.5"/><path d="M16 5 L22 5 L19 8.5 Z" fill="#bcbec2"/></svg>
<div style="left:913px;top:155.5px;width:28.5px;height:17px;background:linear-gradient(#fbfcfe,#eef1f6);border:1px solid #c3c7cc;border-radius:2.5px"></div>
<svg style="left:915.5px;top:157.5px;" width="14" height="14" viewBox="0 0 14 14"><rect x="4.8" y="4.8" width="7.6" height="7.6" fill="#fff" stroke="#555" stroke-width=".9"/><rect x="0.4" y="0.4" width="8" height="8" fill="#3a86e8"/></svg>
<svg style="left:932px;top:162px;" width="7" height="4" viewBox="0 0 7 4"><path d="M0 0 L7 0 L3.5 4 Z" fill="#444"/></svg>
<div style="left:734px;top:175px;width:207.5px;height:1px;background:#dfe1e5"></div>
<svg style="left:734.3px;top:177.2px;" width="15" height="13.5" viewBox="0 0 15 13.5"><path d="M1 10.3 Q7.5 7 14 10.3 Q7.5 13.6 1 10.3 Z M1 6.8 Q7.5 3.5 14 6.8 Q7.5 10.1 1 6.8 Z M1 3.3 Q7.5 0 14 3.3 Q7.5 6.6 1 3.3 Z" fill="#ececec" stroke="#2e2e2e" stroke-width="1.2"/></svg>
<svg style="left:801.5px;top:177px;" width="12.5" height="14.3" viewBox="0 0 12.5 14.3"><path d="M2 0.7 H10.5 Q11.8 0.7 11.8 2 V9.8 L8.0 13.600000000000001 H2 Q0.7 13.600000000000001 0.7 12.3 V2 Q0.7 0.7 2 0.7 Z" fill="#fdfdfd" stroke="#3a3a3a" stroke-width="1.3"/><path d="M11.8 9.8 H8.8 Q8.0 9.8 8.0 10.600000000000001 V13.600000000000001" fill="#e4e4e4" stroke="#3a3a3a" stroke-width="1"/></svg>
<svg style="left:818px;top:177px;" width="12.5" height="14.3" viewBox="0 0 12.5 14.3"><path d="M2 0.7 H10.5 Q11.8 0.7 11.8 2 V9.8 L8.0 13.600000000000001 H2 Q0.7 13.600000000000001 0.7 12.3 V2 Q0.7 0.7 2 0.7 Z" fill="#fdfdfd" stroke="#3a3a3a" stroke-width="1.3"/><path d="M11.8 9.8 H8.8 Q8.0 9.8 8.0 10.600000000000001 V13.600000000000001" fill="#e4e4e4" stroke="#3a3a3a" stroke-width="1"/></svg>
<svg style="left:826px;top:185px;" width="8" height="8" viewBox="0 0 8 8"><path d="M0.5 2.2 L4 0.5 L7.5 2.2 V6 L4 7.7 L0.5 6 Z" fill="#e4e4e4" stroke="#444" stroke-width=".8"/><path d="M0.5 2.2 L4 4 L7.5 2.2 M4 4 V7.7" fill="none" stroke="#666" stroke-width=".6"/></svg>
<svg style="left:836.5px;top:177.5px;" width="16" height="15" viewBox="0 0 16 15"><path d="M0.5 1.5 H5 L6 3 H10.5 V12.5 H0.5 Z" fill="#aaa" stroke="#555" stroke-width=".9"/><path d="M5.5 4.5 H15.5 V11 L12.5 14.5 H5.5 Z" fill="#fdfdfd" stroke="#444" stroke-width="1"/></svg>
<svg style="left:855px;top:177px;" width="14" height="16" viewBox="0 0 14 16"><path d="M1 9 L7 6 L13 9 L7 12 Z" fill="#e9eaed" stroke="#c7c9cd"/><path d="M1 12 L7 15 L13 12" fill="none" stroke="#c7c9cd"/><path d="M7 0.5 V7 M4.5 4.5 L7 7.5 L9.5 4.5" fill="none" stroke="#c2c4c8" stroke-width="1.5"/></svg>
<svg style="left:872.5px;top:177px;" width="14" height="16" viewBox="0 0 14 16"><path d="M1 9 L7 6 L13 9 L7 12 Z" fill="#e9eaed" stroke="#c7c9cd"/><path d="M1 12 L7 15 L13 12" fill="none" stroke="#c7c9cd"/><path d="M7 0.5 V7 M4.5 4.5 L7 7.5 L9.5 4.5" fill="none" stroke="#c2c4c8" stroke-width="1.5"/></svg>
<svg style="left:890px;top:179.8px;" width="15" height="9" viewBox="0 0 15 9"><rect x="0.5" y="0.5" width="14" height="8" fill="#555" stroke="#2a2a2a"/><rect x="1" y="1" width="13" height="3" fill="#6e6e6e"/><circle cx="7.5" cy="4.5" r="2.5" fill="#f6f6f6"/></svg>
<svg style="left:908.5px;top:177px;" width="14" height="16" viewBox="0 0 14 16"><path d="M5 0.5 V14 M5 2 L1 8 H5 M5 14 L2 12" fill="none" stroke="#c4c6ca" stroke-width="1.6"/><path d="M7 3 L13 7 L8 9 Z M8 9 L12 13" fill="#dddfe2" stroke="#c7c9cd"/></svg>
<svg style="left:925.5px;top:177px;" width="13" height="16" viewBox="0 0 13 16"><ellipse cx="6.5" cy="4.2" rx="5.8" ry="2.4" fill="#e2e3e6" stroke="#c4c6ca" stroke-width="1.2"/><path d="M3.5 2.6 C3.5 0.2 9.5 0.2 9.5 2.6" fill="none" stroke="#c4c6ca" stroke-width="1"/><path d="M1.3 5.5 L2.8 14.5 C4 15.8 9 15.8 10.2 14.5 L11.7 5.5" fill="#f1f1f1" stroke="#c4c6ca" stroke-width="1"/><path d="M2 9 C4 10.3 9 10.3 11 9" fill="none" stroke="#c4c6ca" stroke-width=".8"/></svg>
<div style="left:734px;top:195.5px;width:207.5px;height:459.5px;background:#f3f6fb;border-top:1px solid #b6b6b6"></div>
<div style="left:736px;top:196px;width:1px;height:458px;background:#b4b6ba"></div>
<div style="left:734px;top:196px;width:1px;height:458px;background:#b9bbbe"></div>
<div style="left:735px;top:196px;width:1px;height:458px;background:#f4f5f8"></div>
<div style="left:734px;top:653.7px;width:208px;height:1px;background:#b4b6ba"></div>
<div style="left:734px;top:654.7px;width:208px;height:0.6px;background:#eceef2"></div>
<div style="left:930.5px;top:196.5px;width:11px;height:457.2px;background:#d6d8dc"></div>
<div style="left:737px;top:197px;width:193.5px;height:35.5px;background:#f5f7fb;border-bottom:1px solid #c9ccd1"></div>
<div style="left:771px;top:197px;width:159.5px;height:35px;background:linear-gradient(#dbe9f5,#d4e4f1 70%,#cfe0ee)"></div>
<div style="left:754.5px;top:197px;width:1px;height:35px;background:#cfd1d5"></div>
<div style="left:770.5px;top:197px;width:1px;height:35px;background:#cfd1d5"></div>
<svg style="left:740px;top:210.5px;" width="12" height="8" viewBox="0 0 12 8"><path d="M0.5 4 C3 0.2 9 0.2 11.5 4 C9 7.8 3 7.8 0.5 4 Z" fill="#f4f4f4" stroke="#333" stroke-width="1"/><circle cx="6" cy="4" r="2.6" fill="#333"/><circle cx="5.2" cy="3.2" r=".8" fill="#ddd"/></svg>
<svg style="left:756.5px;top:208px;" width="12" height="13" viewBox="0 0 12 13"><path d="M1 12.5 L2 9 L8.5 2.5 L10.5 4.5 L4 11 Z" fill="#f4f4f4" stroke="#333" stroke-width="1"/><path d="M8 2 L10 0.5 L12 2.5 L10.8 4.5 Z" fill="#333"/><path d="M1 12.5 L2.5 10.5" stroke="#333"/></svg>
<div style="left:775px;top:198px;width:34px;height:34px;background:#fff;border:1px solid #444;outline:1px solid #6a6a6a;outline-offset:-3px"></div>
<svg style="left:779px;top:202px" width="26" height="26" viewBox="34 130 447.5 447.5" shape-rendering="geometricPrecision"><polygon points="179.5,278 179.5,249 186,236 194,221 200,215.5 208.5,213.5 213,218 222,238 230,252 237,268 232.5,277.5 225,272.5 217.5,251 210,235 205,225 199,237.5 194,251 194,278" fill="#000" stroke="#000" stroke-width="1.6" stroke-linejoin="round"/><path d="M233 267 C236.7 266.8 247.7 265.2 255 265.5 C262.3 265.8 273.3 268.0 277 268.5" fill="none" stroke="#000" stroke-width="9" stroke-linejoin="round" stroke-linecap="butt"/><polygon points="272.5,263 280,247.5 290,225 300,207.5 309,199.5 315,201 320,220 325,242.5 329,262.5 337.5,277.5 331,285 325,281 317.5,271 315,257.5 312.5,237.5 307.5,219 300,232.5 292.5,252.5 285,270 278,274" fill="#000" stroke="#000" stroke-width="1.6" stroke-linejoin="round"/><path d="M326 272 C327.7 274.2 333.7 280.3 336 285 C338.3 289.7 339.5 294.6 340 300 C340.5 305.4 340.2 312.1 339 317.5 C337.8 322.9 335.2 328.3 332.5 332.5 C329.8 336.7 326.7 339.4 322.5 342.5 C318.3 345.6 310.0 349.6 307.5 351" fill="none" stroke="#000" stroke-width="12" stroke-linejoin="round" stroke-linecap="butt"/><path d="M312 349.5 C310.0 350.3 305.3 352.7 300 354.5 C294.7 356.3 287.5 358.9 280 360.5 C272.5 362.1 264.2 363.4 255 364 C245.8 364.6 234.2 365.0 225 364 C215.8 363.0 206.5 360.8 200 358 C193.5 355.2 189.3 351.2 186 347 C182.7 342.8 181.2 337.8 180 333 C178.8 328.2 179.1 322.7 179 318 C178.9 313.3 179.4 307.2 179.5 305" fill="none" stroke="#000" stroke-width="10.5" stroke-linejoin="round" stroke-linecap="butt"/><path d="M179.5 300 L179.5 336" fill="none" stroke="#000" stroke-width="13" stroke-linejoin="round" stroke-linecap="butt"/><polygon points="159,304 165,298 180,294 210,291 210,305 187.5,307 167.5,309" fill="#000" stroke="#000" stroke-width="1.6" stroke-linejoin="round"/><polygon points="185,317.5 200,314 200,329 185,333" fill="#000" stroke="#000" stroke-width="1.6" stroke-linejoin="round"/><polygon points="178,325 150,332 128,343 116,352 108,366 105.5,372 110.5,377 115,368.5 125,357.5 141,349.5 160,343.5 178,339.5" fill="#000" stroke="#000" stroke-width="1.6" stroke-linejoin="round"/><polygon points="218.75,301 225,294 227.5,300 234,301 237.5,307.5 234,312.5 227.5,310 225,315 219,309" fill="#000" stroke="#000" stroke-width="1.6" stroke-linejoin="round"/><polygon points="259,306 262,290 266,295 273,297 273,307.5 271,312.5 265,309" fill="#000" stroke="#000" stroke-width="1.6" stroke-linejoin="round"/><polygon points="291,303 299,304 317,313 334,323 328,333 312,323 291,314.5" fill="#000" stroke="#000" stroke-width="1.6" stroke-linejoin="round"/><polygon points="284,323 292,326 310,336 330,348 345,357 338,366 322,357 300,346.5 284,338" fill="#000" stroke="#000" stroke-width="1.6" stroke-linejoin="round"/><path d="M322 352 C323.7 353.7 328.3 358.9 332 362 C335.7 365.1 339.8 367.5 344 370.5 C348.2 373.5 352.1 376.3 357 380 C361.9 383.7 368.8 388.2 373.5 392.5 C378.2 396.8 382.5 401.8 385.5 406 C388.5 410.2 390.5 416.0 391.5 418" fill="none" stroke="#000" stroke-width="12.5" stroke-linejoin="round" stroke-linecap="round"/><polygon points="322,361 333,356 344,362 340,372 328,377 324,372" fill="#000" stroke="#000" stroke-width="1.6" stroke-linejoin="round"/><path d="M391 418.5 C387.5 418.3 377.7 418.2 370 417.5 C362.3 416.8 351.7 415.6 345 414.5 C338.3 413.4 334.5 412.2 330 411 C325.5 409.8 320.0 407.7 318 407" fill="none" stroke="#000" stroke-width="10" stroke-linejoin="round" stroke-linecap="round"/><polygon points="209,367.5 209,382.5 190,384 160,388 124,390 124,393 130,398 150,403 185,405 197,406 197,418 180,416 148,413 124,406 116,396 115,388 121,381 145,378 175,374 195,369" fill="#000" stroke="#000" stroke-width="1.6" stroke-linejoin="round"/><path d="M192 410 C191.8 414.6 190.2 427.9 190.5 437.5 C190.8 447.1 192.0 458.8 194 467.5 C196.0 476.2 199.4 484.2 202.5 490 C205.6 495.8 208.9 499.8 212.5 502.5 C216.1 505.2 220.4 506.4 224 506 C227.6 505.6 230.9 503.5 234 500 C237.1 496.5 239.4 491.2 242.5 485 C245.6 478.8 249.6 469.0 252.5 462.5 C255.4 456.0 258.8 448.8 260 446" fill="none" stroke="#000" stroke-width="11.5" stroke-linejoin="round" stroke-linecap="butt"/><path d="M255.5 450 C256.3 455.8 261.8 465.8 265 475 C268.2 484.2 271.7 496.2 275 505 C278.3 513.8 282.1 521.3 285 527.5 C287.9 533.7 289.8 538.6 292.5 542 C295.2 545.4 298.2 546.8 301 548 C303.8 549.2 305.7 550.0 309 549.5 C312.3 549.0 317.8 548.1 321 545 C324.2 541.9 326.3 537.0 328 531 C329.7 525.0 330.4 516.7 331 509 C331.6 501.3 331.5 493.1 331.5 485 C331.5 476.9 331.3 468.7 331 460.6 C330.7 452.5 330.1 443.7 329.5 436.4 C328.9 429.1 327.7 421.7 327.3 417 C326.9 412.3 328.2 410.4 327 408 C325.8 405.6 322.3 402.8 320 402.5 C317.7 402.2 314.2 404.6 313 406 C311.8 407.4 312.4 405.9 313 411 C313.6 416.1 315.3 428.1 316.6 436.4 C317.9 444.7 319.8 452.5 320.9 460.6 C322.0 468.7 323.3 476.9 323.4 485 C323.4 493.1 322.4 501.9 321.2 509 C320.0 516.1 318.4 523.2 316.4 527.5 C314.4 531.8 311.3 534.1 309 535 C306.7 535.9 304.8 535.6 302.5 533 C300.2 530.4 297.9 525.5 295 519.5 C292.1 513.5 288.3 505.7 285 497 C281.7 488.3 278.7 476.5 275 467.5 C271.3 458.5 265.5 447.6 263 443 C260.5 438.4 261.2 438.8 260 440 C258.8 441.2 254.7 444.2 255.5 450 Z" fill="#000" stroke="#000" stroke-width="0.6" stroke-linejoin="round"/><polygon points="253,446 260,440 267,448 262,458 256,456" fill="#000" stroke="#000" stroke-width="1.6" stroke-linejoin="round"/><polygon points="313,406 320,402 327,407 326,416 314,416" fill="#000" stroke="#000" stroke-width="1.6" stroke-linejoin="round"/><polygon points="330,465 337.5,454 342.5,459 370,462.5 405,465.5 416,468 410,472.5 385,476 355,476 337.5,471" fill="#000" stroke="#000" stroke-width="1.6" stroke-linejoin="round"/></svg>
<span class="t" style="transform:scaleX(0.865);left:811.0px;top:198.5px;font-size:11px;line-height:16px;color:#222;">100 %通常</span>
<span class="t" style="transform:scaleX(0.837);left:810.0px;top:216.5px;font-size:11px;line-height:16px;color:#222;"><span class="k">タイリン</span>グ用1</span>
<svg style="left:6px;top:644.5px;" width="50" height="10.5" viewBox="0 0 50 10.5"><rect x="0" y="0" width="50" height="10.5" fill="#f4f6f9"/><path d="M4 10.5 L50 4.2 L50 10.5 Z" fill="#a6a8ab"/><rect x="0.5" y="0.5" width="49" height="9.5" fill="none" stroke="#c4c6ca"/></svg>
<span class="t" style="transform:scaleX(0.799);left:9.0px;top:641.8px;font-size:11px;line-height:16px;color:#000;">100.0</span>
<svg style="left:58px;top:644.5px;" width="36" height="10.5" viewBox="0 0 36 10.5"><rect x="0" y="0" width="36" height="10.5" fill="#f1f3f6"/><path d="M0 10.5 L0 7 L26 1.5 L36 1 L36 10.5 Z" fill="#a6a8ab"/></svg>
<svg style="left:97.5px;top:644.3px;" width="12" height="12" viewBox="0 0 14 14"><path d="M9.5 9.5 L13 13" stroke="#1a1a1a" stroke-width="2.6" stroke-linecap="round"/><circle cx="6" cy="6" r="5.2" fill="#f0f0f0" stroke="#555" stroke-width="1.1"/><circle cx="6" cy="6" r="3.7" fill="#fafafa" stroke="#9a9a9a" stroke-width=".9"/><path d="M3.6 6 H8.4" stroke="#222" stroke-width="1.5"/></svg>
<svg style="left:115.5px;top:644.3px;" width="12" height="12" viewBox="0 0 14 14"><path d="M9.5 9.5 L13 13" stroke="#1a1a1a" stroke-width="2.6" stroke-linecap="round"/><circle cx="6" cy="6" r="5.2" fill="#f0f0f0" stroke="#555" stroke-width="1.1"/><circle cx="6" cy="6" r="3.7" fill="#fafafa" stroke="#9a9a9a" stroke-width=".9"/><path d="M3.6 6 H8.4" stroke="#222" stroke-width="1.5"/><path d="M6 3.6 V8.4" stroke="#222" stroke-width="1.5"/></svg>
<svg style="left:133.5px;top:644.5px;" width="11" height="10.5" viewBox="0 0 11 10.5"><rect x="0" y="0" width="11" height="10.5" fill="#1e1e1e"/><rect x="2.4" y="2.4" width="6.2" height="5.7" fill="none" stroke="#c8c8c8" stroke-width=".8"/></svg>
<svg style="left:150px;top:644.5px;" width="46" height="10.5" viewBox="0 0 46 10.5"><rect x="0" y="0" width="46" height="10.5" fill="#f4f6f9"/><path d="M0 0 L3 0 C12 1 20 10 38 10.5 L0 10.5 Z" fill="#a6a8ab"/><rect x="0.5" y="0.5" width="45" height="9.5" fill="none" stroke="#c4c6ca"/></svg>
<span class="t" style="transform:scaleX(0.784);left:155.0px;top:641.8px;font-size:11px;line-height:16px;color:#000;">0.0</span>
<svg style="left:194.5px;top:644.5px;" width="42" height="10.5" viewBox="0 0 42 10.5"><rect x="0" y="0" width="42" height="10.5" fill="#f1f3f6"/><path d="M0 10.5 L1 8 L9 1 L25 1 L40 9.5 L42 10.5 Z" fill="#a6a8ab"/></svg>
<svg style="left:241.5px;top:644.8px;" width="11" height="9.9" viewBox="0 0 15 13.5"><path d="M3.6 8 V6.6 A4.9 4.9 0 0 1 13.4 6.6 Q13.4 9 12.3 10.6" fill="none" stroke="#1a1a1a" stroke-width="2.6"/><path d="M0.2 7.3 L7.2 7.3 L3.7 12.8 Z" fill="#1a1a1a"/></svg>
<svg style="left:258.5px;top:644.8px;" width="11" height="9.9" viewBox="0 0 15 13.5"><g transform="translate(15 0) scale(-1 1)"><path d="M3.6 8 V6.6 A4.9 4.9 0 0 1 13.4 6.6 Q13.4 9 12.3 10.6" fill="none" stroke="#1a1a1a" stroke-width="2.6"/><path d="M0.2 7.3 L7.2 7.3 L3.7 12.8 Z" fill="#1a1a1a"/></g></svg>
<svg style="left:277.5px;top:644px;" width="11" height="11" viewBox="0 0 14 14"><path d="M12.34 7.81 A5.4 5.4 0 0 1 11.30 10.27" stroke="#4a4a4a" stroke-width="1.6" fill="none"/><path d="M10.20 11.35 A5.4 5.4 0 0 1 7.73 12.35" stroke="#4a4a4a" stroke-width="1.6" fill="none"/><path d="M6.19 12.34 A5.4 5.4 0 0 1 3.73 11.30" stroke="#4a4a4a" stroke-width="1.6" fill="none"/><path d="M2.65 10.20 A5.4 5.4 0 0 1 1.65 7.73" stroke="#4a4a4a" stroke-width="1.6" fill="none"/><path d="M1.66 6.19 A5.4 5.4 0 0 1 2.70 3.73" stroke="#4a4a4a" stroke-width="1.6" fill="none"/><path d="M3.80 2.65 A5.4 5.4 0 0 1 6.27 1.65" stroke="#4a4a4a" stroke-width="1.6" fill="none"/><path d="M7.81 1.66 A5.4 5.4 0 0 1 10.27 2.70" stroke="#4a4a4a" stroke-width="1.6" fill="none"/><path d="M11.35 3.80 A5.4 5.4 0 0 1 12.35 6.27" stroke="#4a4a4a" stroke-width="1.6" fill="none"/></svg>
<div style="left:292px;top:644px;width:219.5px;height:11px;background:#d6d8dc"></div>
<div style="left:292.5px;top:644.5px;width:10px;height:10.5px;background:#f8fafd;border:1px solid #c2c4c8;border-radius:2.5px"></div>
<svg style="left:295.5px;top:646.75px;" width="4" height="6" viewBox="0 0 4 6"><path d="M3.6 0 L3.6 6 L0 3 Z" fill="#4a4a4a"/></svg>
<div style="left:501px;top:644.5px;width:10px;height:10.5px;background:#f8fafd;border:1px solid #c2c4c8;border-radius:2.5px"></div>
<svg style="left:504.4px;top:646.75px;" width="4" height="6" viewBox="0 0 4 6"><path d="M0 0 L0 6 L3.6 3 Z" fill="#4a4a4a"/></svg>
<div style="left:360px;top:644.5px;width:82px;height:10px;background:#f6f8fc;border:1px solid #cdcdcd;border-radius:2.5px"></div>
<svg style="left:398px;top:646.5px;" width="7" height="6" viewBox="0 0 7 6"><path d="M.5 0 V6 M3.5 0 V6 M6.5 0 V6" stroke="#a0a0a0"/></svg>
<div style="left:511.5px;top:644px;width:10.5px;height:11px;background:#f0f1f4"></div>
<div style="left:512px;top:232px;width:10px;height:243px;background:#f6f8fc;border:1px solid #cdcdcd;border-radius:2.5px"></div>
<div style="left:522px;top:63px;width:1px;height:592px;background:#b9babd"></div>
<svg style="left:514px;top:350.5px;" width="6" height="6" viewBox="0 0 6 6"><path d="M0 .5 H6 M0 3 H6 M0 5.5 H6" stroke="#a0a0a0"/></svg>
</body></html>
